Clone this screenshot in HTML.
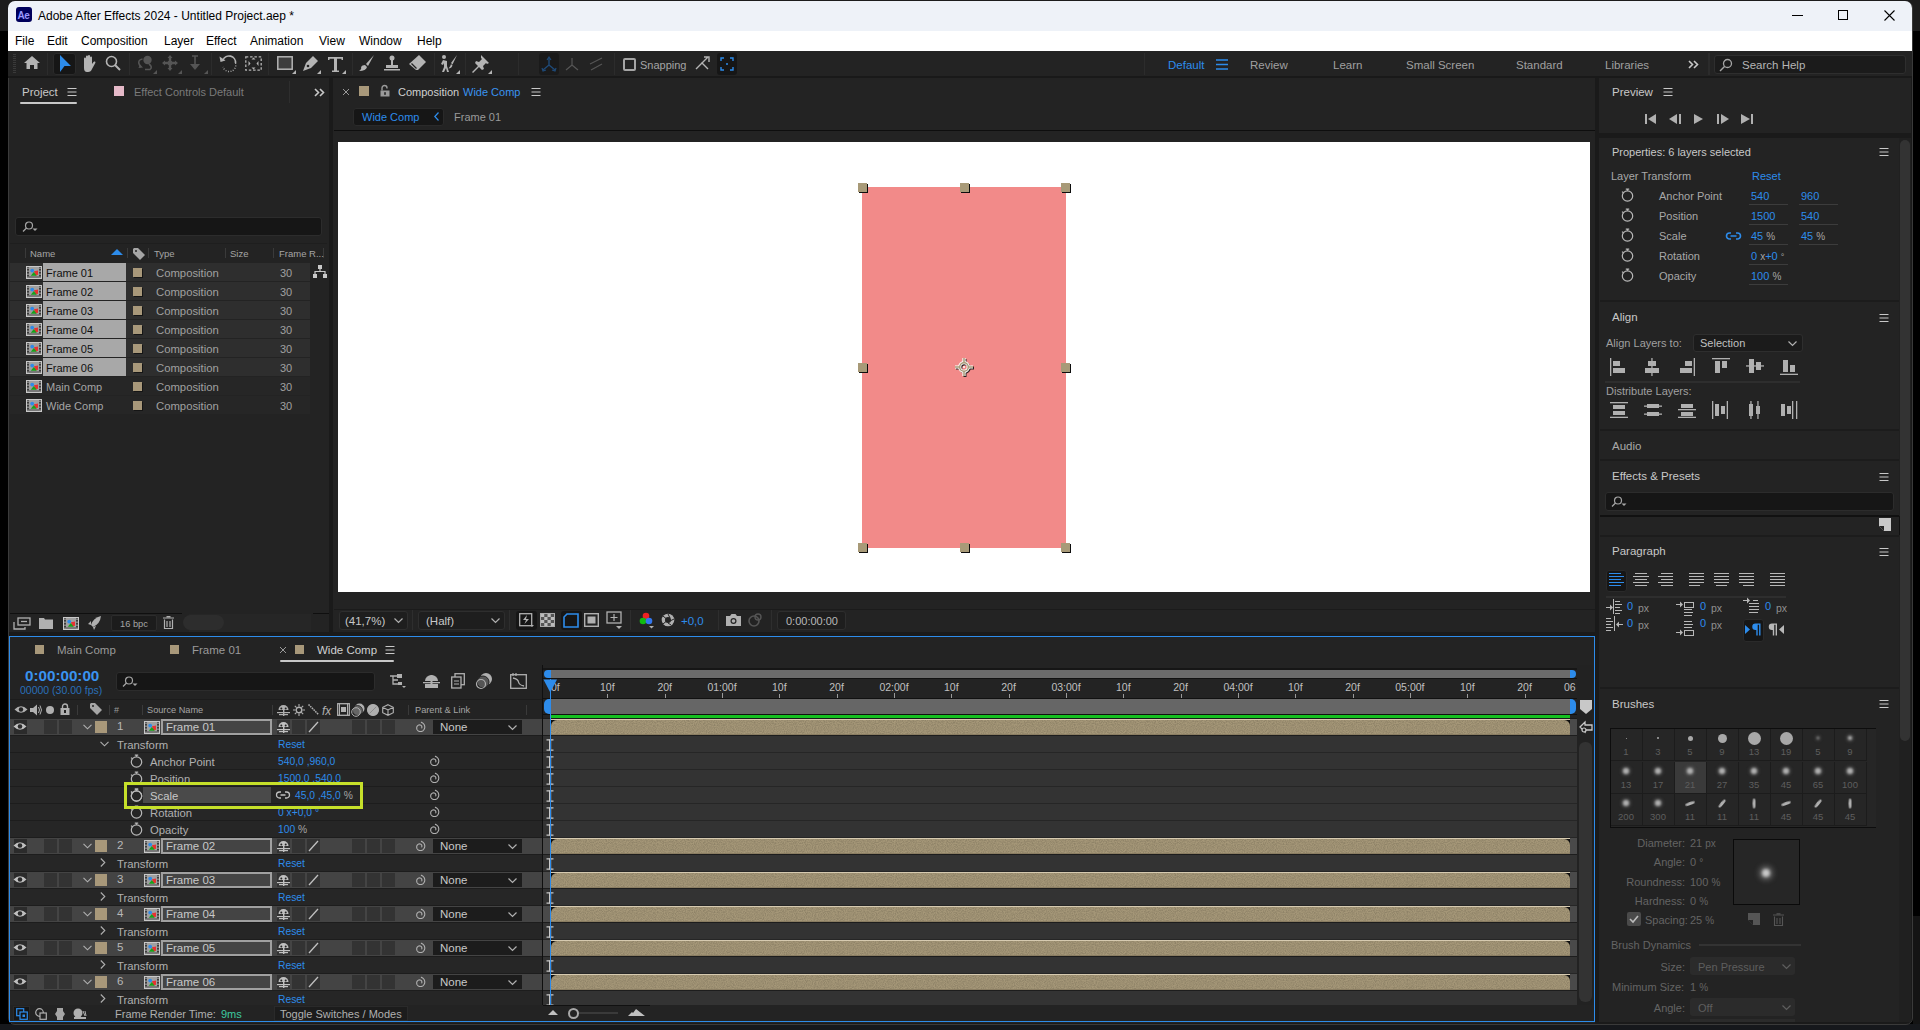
<!DOCTYPE html><html><head><meta charset="utf-8"><style>
*{box-sizing:border-box;margin:0;padding:0}
html,body{width:1920px;height:1030px;overflow:hidden;background:#000;font-family:"Liberation Sans",sans-serif;font-size:12px;color:#a5a5a5}
.a{position:absolute}
.t{position:absolute;white-space:nowrap;line-height:12px;transform:translateY(-5px)}
svg.a{overflow:visible}
</style></head><body>
<div class="a" style="left:0px;top:0px;width:1920px;height:31px;background:#1c1c1c;"></div>
<div class="a" style="left:0px;top:31px;width:1920px;height:999px;background:#000;"></div>
<div class="a" style="left:1913px;top:916px;width:7px;height:114px;background:#141414;"></div>
<div class="a" style="left:0px;top:1024px;width:1920px;height:6px;background:#16181c;"></div>
<div class="a" style="left:8px;top:1px;width:1905px;height:1024px;background:#1a1a1a;border-radius:7px;border:1px solid #3a3a3a;"></div>
<div class="a" style="left:8px;top:1px;width:1904px;height:30px;background:#eef2f8;border-radius:7px 7px 0 0;"></div>
<div class="a" style="left:8px;top:31px;width:1904px;height:20px;background:#ffffff;"></div>
<div class="a" style="left:16px;top:7px;width:16px;height:15px;background:#00005b;border-radius:3px;"></div>
<div class="t" style="left:17.5px;top:14.5px;font-size:10px;color:#9999ff;font-weight:bold;letter-spacing:-0.5px;">Ae</div>
<div class="t" style="left:38px;top:15px;font-size:12px;color:#000;">Adobe After Effects 2024 - Untitled Project.aep *</div>
<div class="a" style="left:1792px;top:15px;width:11px;height:1px;background:#000;"></div>
<div class="a" style="left:1838px;top:10px;width:10px;height:10px;border:1px solid #000;"></div>
<svg class="a" style="left:1884px;top:10px;" width="11" height="11" viewBox="0 0 11 11"><path d="M0.5 0.5L10.5 10.5M10.5 0.5L0.5 10.5" stroke="#000" stroke-width="1.1"/></svg>
<div class="t" style="left:15px;top:40px;font-size:12px;color:#000;">File</div>
<div class="t" style="left:47px;top:40px;font-size:12px;color:#000;">Edit</div>
<div class="t" style="left:81px;top:40px;font-size:12px;color:#000;">Composition</div>
<div class="t" style="left:164px;top:40px;font-size:12px;color:#000;">Layer</div>
<div class="t" style="left:206px;top:40px;font-size:12px;color:#000;">Effect</div>
<div class="t" style="left:250px;top:40px;font-size:12px;color:#000;">Animation</div>
<div class="t" style="left:319px;top:40px;font-size:12px;color:#000;">View</div>
<div class="t" style="left:359px;top:40px;font-size:12px;color:#000;">Window</div>
<div class="t" style="left:417px;top:40px;font-size:12px;color:#000;">Help</div>
<div class="a" style="left:8px;top:51px;width:1904px;height:25px;background:#232323;"></div>
<div class="a" style="left:8px;top:76px;width:1904px;height:2px;background:#191919;"></div>
<div class="a" style="left:13px;top:54px;width:3px;height:1px;background:#3a3a3a;"></div>
<div class="a" style="left:13px;top:56px;width:3px;height:1px;background:#3a3a3a;"></div>
<div class="a" style="left:13px;top:58px;width:3px;height:1px;background:#3a3a3a;"></div>
<div class="a" style="left:13px;top:60px;width:3px;height:1px;background:#3a3a3a;"></div>
<div class="a" style="left:13px;top:62px;width:3px;height:1px;background:#3a3a3a;"></div>
<div class="a" style="left:13px;top:64px;width:3px;height:1px;background:#3a3a3a;"></div>
<div class="a" style="left:13px;top:66px;width:3px;height:1px;background:#3a3a3a;"></div>
<div class="a" style="left:13px;top:68px;width:3px;height:1px;background:#3a3a3a;"></div>
<div class="a" style="left:13px;top:70px;width:3px;height:1px;background:#3a3a3a;"></div>
<div class="a" style="left:13px;top:72px;width:3px;height:1px;background:#3a3a3a;"></div>
<svg class="a" style="left:24px;top:56px;" width="16" height="14" viewBox="0 0 16 14"><path d="M8 0L16 7H13.5V13H10V9H6V13H2.5V7H0Z" fill="#b4b4b4"/></svg>
<div class="a" style="left:47px;top:53px;width:1px;height:22px;background:#2c2c2c;"></div>
<div class="a" style="left:53px;top:53px;width:23px;height:22px;background:#161616;border-radius:3px;border:1px solid #2a2a2a;"></div>
<svg class="a" style="left:59px;top:55px;" width="12" height="18" viewBox="0 0 12 18"><path d="M1 0L12 11H5.5L1 17Z" fill="#2d8ceb"/></svg>
<svg class="a" style="left:81px;top:55px;" width="16" height="17" viewBox="0 0 16 17"><path d="M3 7V3.5a1 1 0 0 1 2 0V7V1.5a1 1 0 0 1 2 0V7V1a1 1 0 0 1 2 0V7V2.5a1 1 0 0 1 2 0V9l1.5-2a1 1 0 0 1 1.8 1L11 14q-1 3-4 3H6q-3 0-3-4Z" fill="#b4b4b4"/></svg>
<svg class="a" style="left:105px;top:55px;" width="16" height="16" viewBox="0 0 16 16"><circle cx="6.5" cy="6.5" r="5" fill="none" stroke="#b4b4b4" stroke-width="1.6"/><path d="M10 10L15 15" stroke="#b4b4b4" stroke-width="2"/></svg>
<div class="a" style="left:129px;top:53px;width:1px;height:22px;background:#2c2c2c;"></div>
<svg class="a" style="left:137px;top:55px;" width="18" height="16" viewBox="0 0 18 16"><circle cx="10.5" cy="5" r="4.2" fill="#555555"/><path d="M5.5 4Q0 5 2.5 10L4 12M12 9Q16 12 13 14.5H8" stroke="#555555" stroke-width="1.6" fill="none"/><path d="M1.5 13L6 12.5L3 9.5Z" fill="#555555"/></svg>
<svg class="a" style="left:162px;top:55px;" width="16" height="16" viewBox="0 0 16 16"><path d="M8 0L10.5 3H9.2V6.8H13V5.5L16 8L13 10.5V9.2H9.2V13H10.5L8 16L5.5 13H6.8V9.2H3V10.5L0 8L3 5.5V6.8H6.8V3H5.5Z" fill="#555555"/><circle cx="8" cy="8" r="2.5" fill="#555555"/></svg>
<svg class="a" style="left:189px;top:55px;" width="12" height="16" viewBox="0 0 12 16"><path d="M3 1H9M6 1V10" stroke="#555555" stroke-width="1.6"/><path d="M1 9H11L6 15Z" fill="#555555"/></svg>
<div class="a" style="left:211px;top:53px;width:1px;height:22px;background:#2c2c2c;"></div>
<svg class="a" style="left:219px;top:55px;" width="18" height="17" viewBox="0 0 18 17"><path d="M4 5A6.5 6.5 0 0 1 16.5 8" stroke="#b4b4b4" stroke-width="1.6" fill="none"/><path d="M16.5 8A6.5 6.5 0 0 1 4 12" stroke="#b4b4b4" stroke-width="1.4" fill="none" stroke-dasharray="0.9 1.6"/><path d="M0.5 1.5L1.5 7L6.5 5.5Z" fill="#b4b4b4"/></svg>
<svg class="a" style="left:245px;top:56px;" width="17" height="15" viewBox="0 0 17 15"><rect x="0.8" y="0.8" width="15.4" height="13.4" fill="none" stroke="#b4b4b4" stroke-width="1.3" stroke-dasharray="2.5 1.8"/><path d="M6.5 3.5h4l-2 -2z M6.5 11.5h4l-2 2z M3.5 5v5l2-2.5z M13.5 5v5l-2-2.5z" fill="#b4b4b4"/></svg>
<div class="a" style="left:268px;top:53px;width:1px;height:22px;background:#2c2c2c;"></div>
<svg class="a" style="left:277px;top:56px;" width="16" height="14" viewBox="0 0 16 14"><rect x="0.8" y="0.8" width="14.4" height="12.4" fill="#3d3d3d" stroke="#b4b4b4" stroke-width="1.5"/></svg>
<svg class="a" style="left:301px;top:55px;" width="18" height="17" viewBox="0 0 18 17"><path d="M2 16l3-8 7-7 5 5-7 7z" fill="#b4b4b4"/><circle cx="7" cy="11" r="1.3" fill="#232323"/></svg>
<svg class="a" style="left:327px;top:56px;" width="17" height="16" viewBox="0 0 17 16"><path d="M1 1H16V4H14.5V2.8H10V14.5H12V16H5V14.5H7V2.8H2.5V4H1Z" fill="#b4b4b4"/></svg>
<div class="a" style="left:352px;top:53px;width:1px;height:22px;background:#2c2c2c;"></div>
<svg class="a" style="left:358px;top:55px;" width="17" height="17" viewBox="0 0 17 17"><path d="M16 0L8 9l2 2Z" fill="#b4b4b4"/><path d="M7 10l2 2q-1 4-8 4q3-2 2-4q1-2 4-2z" fill="#b4b4b4"/></svg>
<svg class="a" style="left:383px;top:55px;" width="18" height="16" viewBox="0 0 18 16"><circle cx="9" cy="3" r="2.5" fill="#b4b4b4"/><rect x="8" y="5" width="2" height="5" fill="#b4b4b4"/><rect x="3" y="10" width="12" height="3" fill="#b4b4b4"/><rect x="1" y="14" width="16" height="1.5" fill="#b4b4b4"/></svg>
<svg class="a" style="left:409px;top:55px;" width="17" height="17" viewBox="0 0 17 17"><path d="M10 0l7 7-8 8-2 0-7-6z" fill="#b4b4b4"/><path d="M2.5 8.5l5 5" stroke="#232323" stroke-width="1.2"/></svg>
<div class="a" style="left:434px;top:53px;width:1px;height:22px;background:#2c2c2c;"></div>
<svg class="a" style="left:440px;top:55px;" width="18" height="17" viewBox="0 0 18 17"><circle cx="4" cy="2" r="2" fill="#b4b4b4"/><path d="M3 5l-2 4 2 1 1-2 0 4-2 5h2l2-4 1 4h2L7 11V6z" fill="#b4b4b4"/><path d="M17 0l-6 8 1.5 1.5z M11 9l1.5 1.5q-1 3-4 3q2-2 2.5-4.5z" fill="#b4b4b4"/></svg>
<div class="a" style="left:465px;top:53px;width:1px;height:22px;background:#2c2c2c;"></div>
<svg class="a" style="left:472px;top:55px;" width="17" height="17" viewBox="0 0 17 17"><path d="M9 0l8 8-2 1-1-1-3 3 1 3-2 1-3-3-6 6-1-1 6-6-3-3 1-2 3 1 3-3-1-1z" fill="#b4b4b4"/></svg>
<div class="a" style="left:518px;top:53px;width:1px;height:22px;background:#2c2c2c;"></div>
<div class="a" style="left:539px;top:53px;width:20px;height:22px;background:#1a1a1a;border-radius:3px;"></div>
<svg class="a" style="left:541px;top:56px;" width="16" height="16" viewBox="0 0 16 16"><path d="M8 2V9M8 9L2 14M8 9L14 14" stroke="#1f4a78" stroke-width="1.4" fill="none"/><path d="M6 4L8 1L10 4M1 12L2 15L5 14M11 14L14 15L15 12" stroke="#1f4a78" stroke-width="1.2" fill="none"/></svg>
<svg class="a" style="left:564px;top:56px;" width="16" height="16" viewBox="0 0 16 16"><path d="M8 2V9M8 9L2 14M8 9L14 14" stroke="#555555" stroke-width="1.2" fill="none"/></svg>
<svg class="a" style="left:588px;top:56px;" width="16" height="16" viewBox="0 0 16 16"><path d="M2 8L14 2M3 14L14 8" stroke="#555555" stroke-width="1.2" fill="none"/></svg>
<div class="a" style="left:614px;top:53px;width:1px;height:22px;background:#2c2c2c;"></div>
<div class="a" style="left:623px;top:58px;width:13px;height:13px;border:2px solid #a5a5a5;border-radius:2px;"></div>
<div class="t" style="left:640px;top:64px;font-size:11px;color:#a5a5a5;">Snapping</div>
<svg class="a" style="left:695px;top:57px;" width="15" height="13" viewBox="0 0 15 13"><path d="M1 12L7 6L13 12" stroke="#b4b4b4" stroke-width="1.4" fill="none"/><path d="M7 6L13 0M9 0H14V5" stroke="#b4b4b4" stroke-width="1.4" fill="none"/></svg>
<div class="a" style="left:717px;top:53px;width:20px;height:22px;background:#161616;border-radius:3px;"></div>
<svg class="a" style="left:720px;top:57px;" width="14" height="14" viewBox="0 0 14 14"><path d="M1 4V1H4M10 1H13V4M13 10V13H10M4 13H1V10" stroke="#2d8ceb" stroke-width="1.4" fill="none"/><circle cx="7" cy="7" r="1" fill="#2d8ceb"/></svg>
<div class="a" style="left:1144px;top:53px;width:1px;height:22px;background:#2c2c2c;"></div>
<div class="t" style="left:1168px;top:64px;font-size:11.5px;color:#2d8ceb;">Default</div>
<svg class="a" style="left:1216px;top:59px;" width="12" height="11" viewBox="0 0 12 11"><path d="M0 1H12M0 5.5H12M0 10H12" stroke="#2d8ceb" stroke-width="1.3"/></svg>
<div class="t" style="left:1250px;top:64px;font-size:11.5px;color:#a0a0a0;">Review</div>
<div class="t" style="left:1333px;top:64px;font-size:11.5px;color:#a0a0a0;">Learn</div>
<div class="t" style="left:1406px;top:64px;font-size:11.5px;color:#a0a0a0;">Small Screen</div>
<div class="t" style="left:1516px;top:64px;font-size:11.5px;color:#a0a0a0;">Standard</div>
<div class="t" style="left:1605px;top:64px;font-size:11.5px;color:#a0a0a0;">Libraries</div>
<svg class="a" style="left:1688px;top:60px;" width="11" height="9" viewBox="0 0 11 9"><path d="M1 1L4.5 4.5L1 8M6 1L9.5 4.5L6 8" stroke="#c8c8c8" stroke-width="1.6" fill="none"/></svg>
<div class="a" style="left:1708px;top:53px;width:2px;height:22px;background:#2b2b2b;"></div>
<div class="a" style="left:1714px;top:55px;width:192px;height:19px;background:#1b1b1b;border-radius:3px;border:1px solid #2e2e2e;"></div>
<svg class="a" style="left:1719px;top:58px;" width="14" height="14" viewBox="0 0 14 14"><circle cx="8.5" cy="5.5" r="4" fill="none" stroke="#a5a5a5" stroke-width="1.3"/><path d="M5.5 8.5L1 13" stroke="#a5a5a5" stroke-width="1.5"/></svg>
<div class="t" style="left:1742px;top:64px;font-size:11.5px;color:#b5b5b5;">Search Help</div>
<svg class="a" style="left:153px;top:70px;" width="4" height="4" viewBox="0 0 4 4"><path d="M4 0V4H0Z" fill="#555555"/></svg>
<svg class="a" style="left:178px;top:70px;" width="4" height="4" viewBox="0 0 4 4"><path d="M4 0V4H0Z" fill="#555555"/></svg>
<svg class="a" style="left:204px;top:70px;" width="4" height="4" viewBox="0 0 4 4"><path d="M4 0V4H0Z" fill="#555555"/></svg>
<svg class="a" style="left:292px;top:70px;" width="4" height="4" viewBox="0 0 4 4"><path d="M4 0V4H0Z" fill="#b4b4b4"/></svg>
<svg class="a" style="left:317px;top:70px;" width="4" height="4" viewBox="0 0 4 4"><path d="M4 0V4H0Z" fill="#b4b4b4"/></svg>
<svg class="a" style="left:342px;top:70px;" width="4" height="4" viewBox="0 0 4 4"><path d="M4 0V4H0Z" fill="#b4b4b4"/></svg>
<svg class="a" style="left:456px;top:70px;" width="4" height="4" viewBox="0 0 4 4"><path d="M4 0V4H0Z" fill="#b4b4b4"/></svg>
<svg class="a" style="left:488px;top:70px;" width="4" height="4" viewBox="0 0 4 4"><path d="M4 0V4H0Z" fill="#b4b4b4"/></svg>
<div class="a" style="left:9px;top:78px;width:320px;height:554px;background:#232323;"></div>
<div class="t" style="left:22px;top:91px;font-size:11.5px;color:#c8c8c8;">Project</div>
<svg class="a" style="left:67px;top:87px;" width="11" height="10" viewBox="0 0 11 10"><path d="M0.5 1.5H9.5M0.5 5H9.5M0.5 8.5H9.5" stroke="#c8c8c8" stroke-width="1"/></svg>
<div class="a" style="left:20px;top:102px;width:57px;height:2px;background:#c8c8c8;border-radius:1px;"></div>
<div class="a" style="left:114px;top:86px;width:10px;height:10px;background:#e5b9c8;"></div>
<div class="t" style="left:134px;top:91px;font-size:11px;color:#7a7a7a;">Effect Controls Default</div>
<div class="a" style="left:289px;top:81px;width:1px;height:22px;background:#2e2e2e;"></div>
<svg class="a" style="left:314px;top:88px;" width="11" height="9" viewBox="0 0 11 9"><path d="M1 1L4.5 4.5L1 8M6 1L9.5 4.5L6 8" stroke="#c8c8c8" stroke-width="1.6" fill="none"/></svg>
<div class="a" style="left:15px;top:217px;width:307px;height:19px;background:#161616;border-radius:3px;border:1px solid #2c2c2c;"></div>
<svg class="a" style="left:22px;top:221px;" width="16" height="12" viewBox="0 0 16 12"><circle cx="7" cy="4.5" r="3.5" fill="none" stroke="#a5a5a5" stroke-width="1.2"/><path d="M4.5 7L1 10.5" stroke="#a5a5a5" stroke-width="1.3"/><path d="M10.5 7.5H15.5L13 10Z" fill="#a5a5a5"/></svg>
<div class="a" style="left:10px;top:243px;width:317px;height:1px;background:#1e1e1e;"></div>
<div class="a" style="left:25px;top:248px;width:1px;height:10px;background:#3a3a3a;"></div>
<div class="a" style="left:127px;top:248px;width:1px;height:10px;background:#3a3a3a;"></div>
<div class="a" style="left:148px;top:248px;width:1px;height:10px;background:#3a3a3a;"></div>
<div class="a" style="left:225px;top:248px;width:1px;height:10px;background:#3a3a3a;"></div>
<div class="a" style="left:273px;top:248px;width:1px;height:10px;background:#3a3a3a;"></div>
<div class="a" style="left:323px;top:248px;width:1px;height:10px;background:#3a3a3a;"></div>
<div class="t" style="left:30px;top:253px;font-size:9.5px;color:#a5a5a5;">Name</div>
<svg class="a" style="left:111px;top:249px;" width="12" height="6" viewBox="0 0 12 6"><path d="M0 6L6 0L12 6Z" fill="#2d8ceb"/></svg>
<svg class="a" style="left:133px;top:248px;" width="12" height="12" viewBox="0 0 12 12"><path d="M0 1V5L7 12L12 7L5 0H1Z" fill="#a5a5a5"/><circle cx="3" cy="3" r="1" fill="#232323"/></svg>
<div class="t" style="left:154px;top:253px;font-size:9.5px;color:#a5a5a5;">Type</div>
<div class="t" style="left:230px;top:253px;font-size:9.5px;color:#a5a5a5;">Size</div>
<div class="t" style="left:279px;top:253px;font-size:9.5px;color:#a5a5a5;">Frame R...</div>
<div class="a" style="left:10px;top:263px;width:300px;height:18px;background:#2e2e2e;"></div>
<svg class="a" style="left:26px;top:266px;" width="16" height="13" viewBox="0 0 16 13"><rect x="0.5" y="0.5" width="15" height="12" fill="#a0a0a0" stroke="#c8c8c8"/><rect x="1" y="1" width="2" height="11" fill="#3c3c3c"/><rect x="13" y="1" width="2" height="11" fill="#3c3c3c"/><path d="M2 1.5V3M2 4.5V6M2 7.5V9M2 10.5V12M14 1.5V3M14 4.5V6M14 7.5V9M14 10.5V12" stroke="#c8c8c8" stroke-width="1"/><rect x="3" y="10.5" width="10" height="1" fill="#505050"/><path d="M8 5.2L12 4.4V8.8L9.2 9.6Z" fill="#e83232"/><path d="M4.8 9.8L7.8 6L10.8 9.8Z" fill="#17a21a"/><circle cx="6.2" cy="4.6" r="1.9" fill="#2f8ae8"/></svg>
<div class="a" style="left:43px;top:263px;width:83px;height:18px;background:#a8a8a8;"></div>
<div class="t" style="left:46px;top:272px;font-size:11px;color:#111;">Frame 01</div>
<div class="a" style="left:133px;top:268px;width:9px;height:9px;background:#a8987a;box-shadow:1px 1px 0 #151515;"></div>
<div class="t" style="left:156px;top:272px;font-size:11.3px;color:#a0a0a0;">Composition</div>
<div class="t" style="left:280px;top:272px;font-size:11px;color:#a0a0a0;">30</div>
<div class="a" style="left:10px;top:282px;width:300px;height:18px;background:#2e2e2e;"></div>
<svg class="a" style="left:26px;top:285px;" width="16" height="13" viewBox="0 0 16 13"><rect x="0.5" y="0.5" width="15" height="12" fill="#a0a0a0" stroke="#c8c8c8"/><rect x="1" y="1" width="2" height="11" fill="#3c3c3c"/><rect x="13" y="1" width="2" height="11" fill="#3c3c3c"/><path d="M2 1.5V3M2 4.5V6M2 7.5V9M2 10.5V12M14 1.5V3M14 4.5V6M14 7.5V9M14 10.5V12" stroke="#c8c8c8" stroke-width="1"/><rect x="3" y="10.5" width="10" height="1" fill="#505050"/><path d="M8 5.2L12 4.4V8.8L9.2 9.6Z" fill="#e83232"/><path d="M4.8 9.8L7.8 6L10.8 9.8Z" fill="#17a21a"/><circle cx="6.2" cy="4.6" r="1.9" fill="#2f8ae8"/></svg>
<div class="a" style="left:43px;top:282px;width:83px;height:18px;background:#a8a8a8;"></div>
<div class="t" style="left:46px;top:291px;font-size:11px;color:#111;">Frame 02</div>
<div class="a" style="left:133px;top:287px;width:9px;height:9px;background:#a8987a;box-shadow:1px 1px 0 #151515;"></div>
<div class="t" style="left:156px;top:291px;font-size:11.3px;color:#a0a0a0;">Composition</div>
<div class="t" style="left:280px;top:291px;font-size:11px;color:#a0a0a0;">30</div>
<div class="a" style="left:10px;top:301px;width:300px;height:18px;background:#2e2e2e;"></div>
<svg class="a" style="left:26px;top:304px;" width="16" height="13" viewBox="0 0 16 13"><rect x="0.5" y="0.5" width="15" height="12" fill="#a0a0a0" stroke="#c8c8c8"/><rect x="1" y="1" width="2" height="11" fill="#3c3c3c"/><rect x="13" y="1" width="2" height="11" fill="#3c3c3c"/><path d="M2 1.5V3M2 4.5V6M2 7.5V9M2 10.5V12M14 1.5V3M14 4.5V6M14 7.5V9M14 10.5V12" stroke="#c8c8c8" stroke-width="1"/><rect x="3" y="10.5" width="10" height="1" fill="#505050"/><path d="M8 5.2L12 4.4V8.8L9.2 9.6Z" fill="#e83232"/><path d="M4.8 9.8L7.8 6L10.8 9.8Z" fill="#17a21a"/><circle cx="6.2" cy="4.6" r="1.9" fill="#2f8ae8"/></svg>
<div class="a" style="left:43px;top:301px;width:83px;height:18px;background:#a8a8a8;"></div>
<div class="t" style="left:46px;top:310px;font-size:11px;color:#111;">Frame 03</div>
<div class="a" style="left:133px;top:306px;width:9px;height:9px;background:#a8987a;box-shadow:1px 1px 0 #151515;"></div>
<div class="t" style="left:156px;top:310px;font-size:11.3px;color:#a0a0a0;">Composition</div>
<div class="t" style="left:280px;top:310px;font-size:11px;color:#a0a0a0;">30</div>
<div class="a" style="left:10px;top:320px;width:300px;height:18px;background:#2e2e2e;"></div>
<svg class="a" style="left:26px;top:323px;" width="16" height="13" viewBox="0 0 16 13"><rect x="0.5" y="0.5" width="15" height="12" fill="#a0a0a0" stroke="#c8c8c8"/><rect x="1" y="1" width="2" height="11" fill="#3c3c3c"/><rect x="13" y="1" width="2" height="11" fill="#3c3c3c"/><path d="M2 1.5V3M2 4.5V6M2 7.5V9M2 10.5V12M14 1.5V3M14 4.5V6M14 7.5V9M14 10.5V12" stroke="#c8c8c8" stroke-width="1"/><rect x="3" y="10.5" width="10" height="1" fill="#505050"/><path d="M8 5.2L12 4.4V8.8L9.2 9.6Z" fill="#e83232"/><path d="M4.8 9.8L7.8 6L10.8 9.8Z" fill="#17a21a"/><circle cx="6.2" cy="4.6" r="1.9" fill="#2f8ae8"/></svg>
<div class="a" style="left:43px;top:320px;width:83px;height:18px;background:#a8a8a8;"></div>
<div class="t" style="left:46px;top:329px;font-size:11px;color:#111;">Frame 04</div>
<div class="a" style="left:133px;top:325px;width:9px;height:9px;background:#a8987a;box-shadow:1px 1px 0 #151515;"></div>
<div class="t" style="left:156px;top:329px;font-size:11.3px;color:#a0a0a0;">Composition</div>
<div class="t" style="left:280px;top:329px;font-size:11px;color:#a0a0a0;">30</div>
<div class="a" style="left:10px;top:339px;width:300px;height:18px;background:#2e2e2e;"></div>
<svg class="a" style="left:26px;top:342px;" width="16" height="13" viewBox="0 0 16 13"><rect x="0.5" y="0.5" width="15" height="12" fill="#a0a0a0" stroke="#c8c8c8"/><rect x="1" y="1" width="2" height="11" fill="#3c3c3c"/><rect x="13" y="1" width="2" height="11" fill="#3c3c3c"/><path d="M2 1.5V3M2 4.5V6M2 7.5V9M2 10.5V12M14 1.5V3M14 4.5V6M14 7.5V9M14 10.5V12" stroke="#c8c8c8" stroke-width="1"/><rect x="3" y="10.5" width="10" height="1" fill="#505050"/><path d="M8 5.2L12 4.4V8.8L9.2 9.6Z" fill="#e83232"/><path d="M4.8 9.8L7.8 6L10.8 9.8Z" fill="#17a21a"/><circle cx="6.2" cy="4.6" r="1.9" fill="#2f8ae8"/></svg>
<div class="a" style="left:43px;top:339px;width:83px;height:18px;background:#a8a8a8;"></div>
<div class="t" style="left:46px;top:348px;font-size:11px;color:#111;">Frame 05</div>
<div class="a" style="left:133px;top:344px;width:9px;height:9px;background:#a8987a;box-shadow:1px 1px 0 #151515;"></div>
<div class="t" style="left:156px;top:348px;font-size:11.3px;color:#a0a0a0;">Composition</div>
<div class="t" style="left:280px;top:348px;font-size:11px;color:#a0a0a0;">30</div>
<div class="a" style="left:10px;top:358px;width:300px;height:18px;background:#2e2e2e;"></div>
<svg class="a" style="left:26px;top:361px;" width="16" height="13" viewBox="0 0 16 13"><rect x="0.5" y="0.5" width="15" height="12" fill="#a0a0a0" stroke="#c8c8c8"/><rect x="1" y="1" width="2" height="11" fill="#3c3c3c"/><rect x="13" y="1" width="2" height="11" fill="#3c3c3c"/><path d="M2 1.5V3M2 4.5V6M2 7.5V9M2 10.5V12M14 1.5V3M14 4.5V6M14 7.5V9M14 10.5V12" stroke="#c8c8c8" stroke-width="1"/><rect x="3" y="10.5" width="10" height="1" fill="#505050"/><path d="M8 5.2L12 4.4V8.8L9.2 9.6Z" fill="#e83232"/><path d="M4.8 9.8L7.8 6L10.8 9.8Z" fill="#17a21a"/><circle cx="6.2" cy="4.6" r="1.9" fill="#2f8ae8"/></svg>
<div class="a" style="left:43px;top:358px;width:83px;height:18px;background:#a8a8a8;"></div>
<div class="t" style="left:46px;top:367px;font-size:11px;color:#111;">Frame 06</div>
<div class="a" style="left:133px;top:363px;width:9px;height:9px;background:#a8987a;box-shadow:1px 1px 0 #151515;"></div>
<div class="t" style="left:156px;top:367px;font-size:11.3px;color:#a0a0a0;">Composition</div>
<div class="t" style="left:280px;top:367px;font-size:11px;color:#a0a0a0;">30</div>
<div class="a" style="left:10px;top:377px;width:300px;height:18px;background:#262626;"></div>
<svg class="a" style="left:26px;top:380px;" width="16" height="13" viewBox="0 0 16 13"><rect x="0.5" y="0.5" width="15" height="12" fill="#a0a0a0" stroke="#c8c8c8"/><rect x="1" y="1" width="2" height="11" fill="#3c3c3c"/><rect x="13" y="1" width="2" height="11" fill="#3c3c3c"/><path d="M2 1.5V3M2 4.5V6M2 7.5V9M2 10.5V12M14 1.5V3M14 4.5V6M14 7.5V9M14 10.5V12" stroke="#c8c8c8" stroke-width="1"/><rect x="3" y="10.5" width="10" height="1" fill="#505050"/><path d="M8 5.2L12 4.4V8.8L9.2 9.6Z" fill="#e83232"/><path d="M4.8 9.8L7.8 6L10.8 9.8Z" fill="#17a21a"/><circle cx="6.2" cy="4.6" r="1.9" fill="#2f8ae8"/></svg>
<div class="t" style="left:46px;top:386px;font-size:11px;color:#a5a5a5;">Main Comp</div>
<div class="a" style="left:133px;top:382px;width:9px;height:9px;background:#a8987a;box-shadow:1px 1px 0 #151515;"></div>
<div class="t" style="left:156px;top:386px;font-size:11.3px;color:#a0a0a0;">Composition</div>
<div class="t" style="left:280px;top:386px;font-size:11px;color:#a0a0a0;">30</div>
<div class="a" style="left:10px;top:396px;width:300px;height:18px;background:#262626;"></div>
<svg class="a" style="left:26px;top:399px;" width="16" height="13" viewBox="0 0 16 13"><rect x="0.5" y="0.5" width="15" height="12" fill="#a0a0a0" stroke="#c8c8c8"/><rect x="1" y="1" width="2" height="11" fill="#3c3c3c"/><rect x="13" y="1" width="2" height="11" fill="#3c3c3c"/><path d="M2 1.5V3M2 4.5V6M2 7.5V9M2 10.5V12M14 1.5V3M14 4.5V6M14 7.5V9M14 10.5V12" stroke="#c8c8c8" stroke-width="1"/><rect x="3" y="10.5" width="10" height="1" fill="#505050"/><path d="M8 5.2L12 4.4V8.8L9.2 9.6Z" fill="#e83232"/><path d="M4.8 9.8L7.8 6L10.8 9.8Z" fill="#17a21a"/><circle cx="6.2" cy="4.6" r="1.9" fill="#2f8ae8"/></svg>
<div class="t" style="left:46px;top:405px;font-size:11px;color:#a5a5a5;">Wide Comp</div>
<div class="a" style="left:133px;top:401px;width:9px;height:9px;background:#a8987a;box-shadow:1px 1px 0 #151515;"></div>
<div class="t" style="left:156px;top:405px;font-size:11.3px;color:#a0a0a0;">Composition</div>
<div class="t" style="left:280px;top:405px;font-size:11px;color:#a0a0a0;">30</div>
<svg class="a" style="left:313px;top:265px;" width="14" height="13" viewBox="0 0 14 13"><rect x="5" y="0" width="4" height="4" fill="#c8c8c8"/><rect x="0" y="9" width="4" height="4" fill="#c8c8c8"/><rect x="10" y="9" width="4" height="4" fill="#c8c8c8"/><path d="M7 4V7M2 9V6.5H12V9" stroke="#c8c8c8" stroke-width="1.2" fill="none"/></svg>
<div class="a" style="left:10px;top:613px;width:172px;height:1px;background:#0f0f0f;"></div>
<div class="a" style="left:313px;top:613px;width:16px;height:1px;background:#0f0f0f;"></div>
<div class="a" style="left:10px;top:614px;width:319px;height:18px;background:#232323;"></div>
<div class="a" style="left:189px;top:614px;width:122px;height:18px;background:#262626;"></div>
<svg class="a" style="left:13px;top:617px;" width="18" height="13" viewBox="0 0 18 13"><rect x="5" y="1" width="12" height="7" fill="none" stroke="#b0b0b0" stroke-width="1.3"/><path d="M8 4.5H14" stroke="#b0b0b0" stroke-width="1.3"/><path d="M1 5V12H12V10" stroke="#b0b0b0" stroke-width="1.3" fill="none"/></svg>
<svg class="a" style="left:39px;top:617px;" width="15" height="13" viewBox="0 0 15 13"><path d="M0 1H5L6 2.5H14V12H0Z" fill="#b0b0b0"/></svg>
<svg class="a" style="left:63px;top:617px;" width="16" height="13" viewBox="0 0 16 13"><rect x="0.5" y="0.5" width="15" height="12" fill="#a0a0a0" stroke="#c8c8c8"/><rect x="1" y="1" width="2" height="11" fill="#3c3c3c"/><rect x="13" y="1" width="2" height="11" fill="#3c3c3c"/><path d="M2 1.5V3M2 4.5V6M2 7.5V9M2 10.5V12M14 1.5V3M14 4.5V6M14 7.5V9M14 10.5V12" stroke="#c8c8c8" stroke-width="1"/><rect x="3" y="10.5" width="10" height="1" fill="#505050"/><path d="M8 5.2L12 4.4V8.8L9.2 9.6Z" fill="#e83232"/><path d="M4.8 9.8L7.8 6L10.8 9.8Z" fill="#17a21a"/><circle cx="6.2" cy="4.6" r="1.9" fill="#2f8ae8"/></svg>
<svg class="a" style="left:88px;top:616px;" width="14" height="15" viewBox="0 0 14 15"><path d="M13 0Q5 2 3 9L5 11Q12 8 13 0Z" fill="#b0b0b0"/><path d="M3 9L0 8L3 5ZM5 11L6 14L8 10Z" fill="#b0b0b0"/></svg>
<div class="a" style="left:111px;top:615px;width:46px;height:16px;background:#1c1c1c;border-radius:2px;border:1px solid #2c2c2c;"></div>
<div class="t" style="left:120px;top:623px;font-size:9.3px;color:#a5a5a5;">16 bpc</div>
<svg class="a" style="left:163px;top:616px;" width="11" height="13" viewBox="0 0 11 13"><path d="M0 2H11M3.5 0.7H7.5M1.5 3.5V12.5H9.5V3.5M4 5V11M7 5V11" stroke="#b0b0b0" stroke-width="1.2" fill="none"/></svg>
<div class="a" style="left:183px;top:615px;width:41px;height:15px;background:#2d2d2d;border-radius:8px;"></div>
<div class="a" style="left:333px;top:78px;width:1262px;height:554px;background:#232323;"></div>
<svg class="a" style="left:342px;top:88px;" width="8" height="8" viewBox="0 0 8 8"><path d="M1 1L7 7M7 1L1 7" stroke="#9a9a9a" stroke-width="1"/></svg>
<div class="a" style="left:359px;top:86px;width:10px;height:10px;background:#a8987a;"></div>
<svg class="a" style="left:380px;top:85px;" width="10" height="12" viewBox="0 0 10 12"><path d="M2 5.5V3a2.5 2.5 0 0 1 5 0V3.5" stroke="#9a9a9a" stroke-width="1.4" fill="none"/><rect x="0.5" y="5.5" width="9" height="6" fill="#9a9a9a"/><rect x="4.2" y="7.2" width="1.6" height="2.6" fill="#232323"/></svg>
<div class="t" style="left:398px;top:91px;font-size:11px;color:#d0d0d0;">Composition</div>
<div class="t" style="left:463px;top:91px;font-size:11px;color:#3a93f0;">Wide Comp</div>
<svg class="a" style="left:531px;top:87px;" width="11" height="10" viewBox="0 0 11 10"><path d="M0.5 1.5H9.5M0.5 5H9.5M0.5 8.5H9.5" stroke="#c8c8c8" stroke-width="1"/></svg>
<div class="a" style="left:353px;top:108px;width:91px;height:18px;background:#161616;border-radius:3px;border:1px solid #2a2a2a;"></div>
<div class="t" style="left:362px;top:116px;font-size:11px;color:#2d8ceb;">Wide Comp</div>
<svg class="a" style="left:434px;top:112px;" width="5" height="9" viewBox="0 0 5 9"><path d="M4.5 0.5L0.8 4.5L4.5 8.5" stroke="#2d8ceb" stroke-width="1.2" fill="none"/></svg>
<div class="t" style="left:454px;top:116px;font-size:11px;color:#9a9a9a;">Frame 01</div>
<div class="a" style="left:334px;top:130px;width:1261px;height:1px;background:#0e0e0e;"></div>
<div class="a" style="left:334px;top:131px;width:1261px;height:473px;background:#232323;"></div>
<div class="a" style="left:338px;top:142px;width:1252px;height:450px;background:#ffffff;"></div>
<div class="a" style="left:862px;top:187px;width:204px;height:361px;background:#f28a89;"></div>
<div class="a" style="left:859px;top:184px;width:9px;height:9px;background:#0d0d0d;"></div>
<div class="a" style="left:858px;top:183px;width:9px;height:9px;background:#a89a78;"></div>
<div class="a" style="left:859px;top:364px;width:9px;height:9px;background:#0d0d0d;"></div>
<div class="a" style="left:858px;top:363px;width:9px;height:9px;background:#a89a78;"></div>
<div class="a" style="left:859px;top:544px;width:9px;height:9px;background:#0d0d0d;"></div>
<div class="a" style="left:858px;top:543px;width:9px;height:9px;background:#a89a78;"></div>
<div class="a" style="left:961px;top:184px;width:9px;height:9px;background:#0d0d0d;"></div>
<div class="a" style="left:960px;top:183px;width:9px;height:9px;background:#a89a78;"></div>
<div class="a" style="left:961px;top:544px;width:9px;height:9px;background:#0d0d0d;"></div>
<div class="a" style="left:960px;top:543px;width:9px;height:9px;background:#a89a78;"></div>
<div class="a" style="left:1062px;top:184px;width:9px;height:9px;background:#0d0d0d;"></div>
<div class="a" style="left:1061px;top:183px;width:9px;height:9px;background:#a89a78;"></div>
<div class="a" style="left:1062px;top:364px;width:9px;height:9px;background:#0d0d0d;"></div>
<div class="a" style="left:1061px;top:363px;width:9px;height:9px;background:#a89a78;"></div>
<div class="a" style="left:1062px;top:544px;width:9px;height:9px;background:#0d0d0d;"></div>
<div class="a" style="left:1061px;top:543px;width:9px;height:9px;background:#a89a78;"></div>
<svg class="a" style="left:954px;top:357px;" width="21" height="21" viewBox="0 0 21 21"><g transform="translate(1,1)"><circle cx="10" cy="10" r="4.3" fill="none" stroke="#2a2020" stroke-width="3"/><path d="M10 1V5.7M10 14.3V19M1 10H5.7M14.3 10H19" stroke="#2a2020" stroke-width="3"/></g><circle cx="10" cy="10" r="4.3" fill="none" stroke="#ffffff" stroke-width="3.2"/><path d="M10 1V5.7M10 14.3V19M1 10H5.7M14.3 10H19" stroke="#ffffff" stroke-width="3.2"/><circle cx="10" cy="10" r="4.3" fill="none" stroke="#a89a78" stroke-width="1.5"/><path d="M10 1V5.7M10 14.3V19M1 10H5.7M14.3 10H19" stroke="#a89a78" stroke-width="1.5"/><circle cx="10" cy="10" r="1" fill="#fff"/></svg>
<div class="a" style="left:334px;top:609px;width:1261px;height:1px;background:#1b1b1b;"></div>
<div class="a" style="left:339px;top:611px;width:69px;height:19px;background:#1e1e1e;border-radius:3px;border:1px solid #2e2e2e;"></div>
<div class="t" style="left:345px;top:620px;font-size:11.5px;color:#c8c8c8;">(41,7%)</div>
<svg class="a" style="left:394px;top:618px;" width="9" height="5" viewBox="0 0 9 5"><path d="M0.5 0.5L4.5 4.5L8.5 0.5" stroke="#b0b0b0" stroke-width="1.2" fill="none"/></svg>
<div class="a" style="left:412px;top:610px;width:1px;height:20px;background:#2e2e2e;"></div>
<div class="a" style="left:418px;top:611px;width:87px;height:19px;background:#1e1e1e;border-radius:3px;border:1px solid #2e2e2e;"></div>
<div class="t" style="left:426px;top:620px;font-size:11.5px;color:#c8c8c8;">(Half)</div>
<svg class="a" style="left:491px;top:618px;" width="9" height="5" viewBox="0 0 9 5"><path d="M0.5 0.5L4.5 4.5L8.5 0.5" stroke="#b0b0b0" stroke-width="1.2" fill="none"/></svg>
<div class="a" style="left:509px;top:610px;width:1px;height:20px;background:#2e2e2e;"></div>
<div class="a" style="left:516px;top:611px;width:21px;height:19px;background:#161616;border-radius:3px;"></div>
<svg class="a" style="left:519px;top:613px;" width="15" height="15" viewBox="0 0 15 15"><rect x="0.7" y="0.7" width="12" height="12" fill="none" stroke="#b0b0b0" stroke-width="1.3"/><path d="M8 2L4 7H7L5.5 11L10 6H7Z" fill="#b0b0b0"/><path d="M11 12H15L13 14Z" fill="#b0b0b0"/></svg>
<svg class="a" style="left:540px;top:613px;" width="15" height="14" viewBox="0 0 15 14"><rect x="0.5" y="0.5" width="14" height="13" fill="#555" stroke="#aaa"/><rect x="1.0" y="1" width="3.25" height="3" fill="#bbb"/><rect x="1.0" y="7" width="3.25" height="3" fill="#bbb"/><rect x="4.25" y="4" width="3.25" height="3" fill="#bbb"/><rect x="4.25" y="10" width="3.25" height="3" fill="#bbb"/><rect x="7.5" y="1" width="3.25" height="3" fill="#bbb"/><rect x="7.5" y="7" width="3.25" height="3" fill="#bbb"/><rect x="10.75" y="4" width="3.25" height="3" fill="#bbb"/><rect x="10.75" y="10" width="3.25" height="3" fill="#bbb"/></svg>
<div class="a" style="left:561px;top:611px;width:21px;height:19px;background:#161616;border-radius:3px;"></div>
<svg class="a" style="left:563px;top:613px;" width="16" height="15" viewBox="0 0 16 15"><path d="M4 1H15V14H1V4Z" fill="none" stroke="#2d8ceb" stroke-width="1.6"/></svg>
<svg class="a" style="left:584px;top:613px;" width="15" height="14" viewBox="0 0 15 14"><rect x="0.7" y="0.7" width="13.6" height="12.6" fill="none" stroke="#b0b0b0" stroke-width="1.4"/><rect x="3.5" y="3.5" width="8" height="7" fill="#b0b0b0"/></svg>
<svg class="a" style="left:606px;top:611px;" width="17" height="18" viewBox="0 0 17 18"><rect x="1" y="1" width="14" height="11" fill="none" stroke="#b0b0b0" stroke-width="1.3"/><path d="M8 3V10M4.5 6.5H11.5" stroke="#b0b0b0" stroke-width="1.2"/><path d="M10 15H16L13 18Z" fill="#b0b0b0"/></svg>
<div class="a" style="left:630px;top:610px;width:1px;height:20px;background:#2e2e2e;"></div>
<svg class="a" style="left:638px;top:612px;" width="17" height="17" viewBox="0 0 17 17"><circle cx="8" cy="4" r="3.3" fill="#e22"/><circle cx="5" cy="9" r="3.3" fill="#1b1"/><circle cx="11" cy="9" r="3.3" fill="#37e"/><path d="M11 14H16L13.5 16.5Z" fill="#b0b0b0"/></svg>
<svg class="a" style="left:661px;top:613px;" width="14" height="14" viewBox="0 0 14 14"><circle cx="7" cy="7" r="6.3" fill="#b0b0b0"/><circle cx="7" cy="7" r="3" fill="#232323"/><path d="M7 1L9 5M13 6L9 8M10 12L7 10M2 11L5 8.5M2 3L5 5.5" stroke="#232323" stroke-width="1"/></svg>
<div class="t" style="left:681px;top:620px;font-size:11.5px;color:#2d8ceb;">+0,0</div>
<div class="a" style="left:718px;top:610px;width:1px;height:20px;background:#2e2e2e;"></div>
<svg class="a" style="left:726px;top:614px;" width="15" height="12" viewBox="0 0 15 12"><path d="M0 2H4L5.5 0H9.5L11 2H15V12H0Z" fill="#b0b0b0"/><circle cx="7.5" cy="7" r="3" fill="#232323"/><circle cx="7.5" cy="7" r="1.8" fill="#b0b0b0"/></svg>
<svg class="a" style="left:747px;top:613px;" width="16" height="14" viewBox="0 0 16 14"><circle cx="7" cy="8" r="5" fill="none" stroke="#555" stroke-width="1.6"/><circle cx="11" cy="4" r="3" fill="none" stroke="#555" stroke-width="1.4"/></svg>
<div class="a" style="left:771px;top:610px;width:1px;height:20px;background:#2e2e2e;"></div>
<div class="a" style="left:777px;top:611px;width:69px;height:19px;background:#1e1e1e;border-radius:3px;border:1px solid #2e2e2e;"></div>
<div class="t" style="left:786px;top:620px;font-size:11px;color:#b8b8b8;">0:00:00:00</div>
<div class="a" style="left:9px;top:636px;width:1586px;height:387px;background:#232323;"></div>
<div class="a" style="left:9px;top:636px;width:1586px;height:1px;background:#2d8ceb;"></div>
<div class="a" style="left:9px;top:636px;width:1px;height:386px;background:#2d8ceb;"></div>
<div class="a" style="left:1594px;top:636px;width:1px;height:386px;background:#2d8ceb;"></div>
<div class="a" style="left:9px;top:1021px;width:1586px;height:1px;background:#2d8ceb;"></div>
<div class="a" style="left:35px;top:645px;width:9px;height:9px;background:#a8987a;"></div>
<div class="t" style="left:57px;top:649px;font-size:11.5px;color:#9a9a9a;">Main Comp</div>
<div class="a" style="left:170px;top:645px;width:9px;height:9px;background:#a8987a;"></div>
<div class="t" style="left:192px;top:649px;font-size:11.5px;color:#9a9a9a;">Frame 01</div>
<svg class="a" style="left:279px;top:646px;" width="8" height="8" viewBox="0 0 8 8"><path d="M1 1L7 7M7 1L1 7" stroke="#9a9a9a" stroke-width="1"/></svg>
<div class="a" style="left:295px;top:645px;width:9px;height:9px;background:#a8987a;"></div>
<div class="t" style="left:317px;top:649px;font-size:11.5px;color:#d0d0d0;">Wide Comp</div>
<svg class="a" style="left:385px;top:645px;" width="11" height="10" viewBox="0 0 11 10"><path d="M0.5 1.5H9.5M0.5 5H9.5M0.5 8.5H9.5" stroke="#c8c8c8" stroke-width="1"/></svg>
<div class="a" style="left:280px;top:660px;width:114px;height:2px;background:#c8c8c8;border-radius:1px;"></div>
<div class="t" style="left:25px;top:675px;font-size:15.2px;color:#3a93f0;font-weight:bold;">0:00:00:00</div>
<div class="t" style="left:20px;top:689px;font-size:10.5px;color:#2a6fb8;">00000 (30.00 fps)</div>
<div class="a" style="left:116px;top:672px;width:259px;height:19px;background:#161616;border-radius:3px;border:1px solid #2c2c2c;"></div>
<svg class="a" style="left:122px;top:676px;" width="16" height="12" viewBox="0 0 16 12"><circle cx="7" cy="4.5" r="3.5" fill="none" stroke="#a5a5a5" stroke-width="1.2"/><path d="M4.5 7L1 10.5" stroke="#a5a5a5" stroke-width="1.3"/><path d="M10.5 7.5H15.5L13 10Z" fill="#a5a5a5"/></svg>
<svg class="a" style="left:389px;top:673px;" width="18" height="16" viewBox="0 0 18 16"><path d="M1 3H8M4 3V11H9M4 7H9" stroke="#b0b0b0" stroke-width="1.3" fill="none"/><rect x="8" y="1" width="5" height="4" fill="#b0b0b0"/><rect x="9" y="9" width="4" height="3" fill="#b0b0b0"/><path d="M13 13H17L15 15Z" fill="#b0b0b0"/></svg>
<svg class="a" style="left:423px;top:674px;" width="17" height="14" viewBox="0 0 17 14"><path d="M2 7A6.5 6 0 0 1 15 7Z" fill="#b0b0b0"/><rect x="0" y="8" width="17" height="1.3" fill="#b0b0b0"/><rect x="7.5" y="1" width="2" height="12" fill="#b0b0b0"/><rect x="2" y="10" width="13" height="4" fill="#b0b0b0"/></svg>
<svg class="a" style="left:451px;top:673px;" width="14" height="16" viewBox="0 0 14 16"><rect x="4" y="0.7" width="9.3" height="11" fill="none" stroke="#b0b0b0" stroke-width="1.3"/><rect x="0.7" y="4" width="9.3" height="11" fill="#232323" stroke="#b0b0b0" stroke-width="1.3"/><path d="M3 8H8M3 11H8" stroke="#b0b0b0"/></svg>
<svg class="a" style="left:476px;top:673px;" width="17" height="16" viewBox="0 0 17 16"><circle cx="10" cy="6" r="6" fill="#b0b0b0"/><circle cx="7" cy="9" r="6" fill="#555" stroke="#232323"/><circle cx="5" cy="11" r="4.5" fill="none" stroke="#b0b0b0" stroke-width="1.2"/></svg>
<svg class="a" style="left:510px;top:672px;" width="17" height="17" viewBox="0 0 17 17"><rect x="0.7" y="2.7" width="15.6" height="13.6" fill="none" stroke="#b0b0b0" stroke-width="1.3"/><path d="M3 1V4M6 1V4" stroke="#b0b0b0" stroke-width="1.2"/><path d="M3 6Q8 7 8.5 10T14 14" stroke="#b0b0b0" stroke-width="1.3" fill="none"/></svg>
<div class="a" style="left:10px;top:699px;width:532px;height:1px;background:#1c1c1c;"></div>
<svg class="a" style="left:14px;top:705px;" width="14" height="9" viewBox="0 0 14 9"><path d="M0.5 4.5Q7 -2 13.5 4.5Q7 11 0.5 4.5Z" fill="#b0b0b0"/><circle cx="7" cy="4.5" r="2.2" fill="#232323"/></svg>
<svg class="a" style="left:30px;top:704px;" width="12" height="12" viewBox="0 0 12 12"><path d="M0 4H3L7 0.5V11.5L3 8H0Z" fill="#b0b0b0"/><path d="M8.5 3Q10.5 6 8.5 9M10 1.5Q13 6 10 10.5" stroke="#b0b0b0" fill="none"/></svg>
<div class="a" style="left:46px;top:706px;width:8px;height:8px;border-radius:50%;background:#b0b0b0"></div>
<svg class="a" style="left:60px;top:703px;" width="10" height="12" viewBox="0 0 10 12"><path d="M2.5 5V3.5a2.5 2.5 0 0 1 5 0V5" stroke="#b0b0b0" stroke-width="1.4" fill="none"/><rect x="0.5" y="5" width="9" height="7" fill="#b0b0b0"/><rect x="4" y="7" width="2" height="3" fill="#232323"/></svg>
<div class="a" style="left:77px;top:705px;width:1px;height:10px;background:#3a3a3a;"></div>
<svg class="a" style="left:90px;top:703px;" width="12" height="12" viewBox="0 0 12 12"><path d="M0 1V5L7 12L12 7L5 0H1Z" fill="#a5a5a5"/><circle cx="3" cy="3" r="1" fill="#232323"/></svg>
<div class="a" style="left:109px;top:705px;width:1px;height:10px;background:#3a3a3a;"></div>
<div class="t" style="left:114px;top:709px;font-size:9px;color:#9a9a9a;">#</div>
<div class="a" style="left:142px;top:705px;width:1px;height:10px;background:#3a3a3a;"></div>
<div class="t" style="left:147px;top:709px;font-size:9.2px;color:#a5a5a5;">Source Name</div>
<div class="a" style="left:272px;top:705px;width:1px;height:10px;background:#3a3a3a;"></div>
<svg class="a" style="left:277px;top:704px;" width="13" height="12" viewBox="0 0 13 12"><path d="M1.5 6A5 5 0 0 1 11.5 6Z" fill="#b0b0b0"/><rect x="0" y="8" width="13" height="1.2" fill="#b0b0b0"/><rect x="6" y="2" width="1.4" height="10" fill="#b0b0b0"/><circle cx="4.3" cy="4.6" r="1" fill="#232323"/><circle cx="8.7" cy="4.6" r="1" fill="#232323"/><rect x="2" y="10" width="9" height="1.2" fill="#b0b0b0"/></svg>
<svg class="a" style="left:293px;top:704px;" width="12" height="12" viewBox="0 0 12 12"><circle cx="6" cy="6" r="2.8" fill="none" stroke="#b0b0b0" stroke-width="1.4"/><path d="M6 0V2.5M6 9.5V12M0 6H2.5M9.5 6H12M1.8 1.8L3.6 3.6M8.4 8.4L10.2 10.2M1.8 10.2L3.6 8.4M8.4 3.6L10.2 1.8" stroke="#b0b0b0" stroke-width="1.1"/></svg>
<svg class="a" style="left:308px;top:704px;" width="11" height="11" viewBox="0 0 11 11"><path d="M0.5 0.5L10.5 10.5" stroke="#b0b0b0" stroke-width="1.5" stroke-dasharray="1.6 0.8"/></svg>
<div class="t" style="left:322px;top:710px;font-size:12px;color:#b0b0b0;font-family:"Liberation Serif",serif;"><i>fx</i></div>
<svg class="a" style="left:337px;top:703px;" width="13" height="13" viewBox="0 0 13 13"><rect x="0.7" y="0.7" width="11.6" height="11.6" fill="none" stroke="#b0b0b0" stroke-width="1.3"/><path d="M2.5 0.5V12.5M10.5 0.5V12.5" stroke="#b0b0b0" stroke-width="1"/><rect x="4" y="4" width="5" height="5" fill="#b0b0b0"/></svg>
<svg class="a" style="left:351px;top:703px;" width="14" height="14" viewBox="0 0 14 14"><circle cx="8.5" cy="5.5" r="5" fill="#b0b0b0"/><circle cx="6.5" cy="7.5" r="5" fill="#666" stroke="#232323" stroke-width="0.8"/><circle cx="5" cy="9" r="4.3" fill="none" stroke="#b0b0b0" stroke-width="1"/></svg>
<svg class="a" style="left:367px;top:704px;" width="12" height="12" viewBox="0 0 12 12"><circle cx="6" cy="6" r="5.4" fill="none" stroke="#b0b0b0" stroke-width="1.2"/><path d="M10 2L2 10A5.4 5.4 0 0 0 10 2Z" fill="#b0b0b0"/><path d="M2 10A5.4 5.4 0 0 1 10 2Z" fill="#b0b0b0" opacity="1"/></svg>
<svg class="a" style="left:382px;top:704px;" width="12" height="12" viewBox="0 0 12 12"><path d="M6 0.7L11.3 3.3V8.7L6 11.3L0.7 8.7V3.3Z M0.7 3.3L6 6L11.3 3.3M6 6V11.3" stroke="#b0b0b0" stroke-width="1.1" fill="none"/></svg>
<div class="a" style="left:408px;top:705px;width:1px;height:10px;background:#3a3a3a;"></div>
<div class="t" style="left:415px;top:709px;font-size:9.2px;color:#a5a5a5;">Parent &amp; Link</div>
<div class="a" style="left:526px;top:705px;width:1px;height:10px;background:#3a3a3a;"></div>
<svg width="0" height="0" style="position:absolute"><filter id="nz" x="0" y="0" width="100%" height="100%"><feTurbulence type="fractalNoise" baseFrequency="0.9" numOctaves="2" seed="3"/><feColorMatrix type="matrix" values="0 0 0 0 0  0 0 0 0 0  0 0 0 0 0  0 0 0 -2.2 1.5"/></filter></svg>
<div class="a" style="left:10px;top:719px;width:532px;height:16px;background:#444444;"></div>
<div class="a" style="left:10px;top:735px;width:532px;height:1px;background:#1d1d1d;"></div>
<div class="a" style="left:14px;top:720px;width:13px;height:14px;background:#2b2b2b;"></div>
<svg class="a" style="left:13px;top:722px;" width="14" height="9" viewBox="0 0 14 9"><path d="M0.5 4.5Q7 -2 13.5 4.5Q7 11 0.5 4.5Z" fill="#c0c0c0"/><circle cx="7" cy="4.5" r="2.3" fill="#2a2a2a"/></svg>
<div class="a" style="left:44px;top:720px;width:13px;height:14px;background:#333333;"></div>
<div class="a" style="left:59px;top:720px;width:13px;height:14px;background:#333333;"></div>
<svg class="a" style="left:83px;top:724px;" width="9" height="6" viewBox="0 0 9 6"><path d="M0.5 0.8L4.5 4.8L8.5 0.8" stroke="#b0b0b0" stroke-width="1.1" fill="none"/></svg>
<div class="a" style="left:95px;top:721px;width:12px;height:12px;background:#a8987a;"></div>
<div class="t" style="left:117px;top:725px;font-size:11.5px;color:#b8b8b8;">1</div>
<svg class="a" style="left:144px;top:721px;" width="16" height="13" viewBox="0 0 16 13"><rect x="0.5" y="0.5" width="15" height="12" fill="#a0a0a0" stroke="#c8c8c8"/><rect x="1" y="1" width="2" height="11" fill="#3c3c3c"/><rect x="13" y="1" width="2" height="11" fill="#3c3c3c"/><path d="M2 1.5V3M2 4.5V6M2 7.5V9M2 10.5V12M14 1.5V3M14 4.5V6M14 7.5V9M14 10.5V12" stroke="#c8c8c8" stroke-width="1"/><rect x="3" y="10.5" width="10" height="1" fill="#505050"/><path d="M8 5.2L12 4.4V8.8L9.2 9.6Z" fill="#e83232"/><path d="M4.8 9.8L7.8 6L10.8 9.8Z" fill="#17a21a"/><circle cx="6.2" cy="4.6" r="1.9" fill="#2f8ae8"/></svg>
<div class="a" style="left:161px;top:719px;width:111px;height:16px;background:#444444;border:2px solid #a0a0a0;"></div>
<div class="t" style="left:166px;top:726px;font-size:11.5px;color:#c8c8c8;">Frame 01</div>
<div class="a" style="left:277px;top:720px;width:13px;height:14px;background:#333333;"></div>
<svg class="a" style="left:277px;top:721px;" width="13" height="12" viewBox="0 0 13 12"><path d="M1.5 6A5 5 0 0 1 11.5 6Z" fill="#c0c0c0"/><rect x="0" y="8" width="13" height="1.2" fill="#c0c0c0"/><rect x="6" y="2" width="1.4" height="10" fill="#c0c0c0"/><circle cx="4.3" cy="4.6" r="1" fill="#232323"/><circle cx="8.7" cy="4.6" r="1" fill="#232323"/><rect x="2" y="10" width="9" height="1.2" fill="#c0c0c0"/></svg>
<div class="a" style="left:292px;top:720px;width:13px;height:14px;background:#333333;"></div>
<div class="a" style="left:307px;top:720px;width:13px;height:14px;background:#333333;"></div>
<svg class="a" style="left:308px;top:721px;" width="11" height="12" viewBox="0 0 11 12"><path d="M1 11L10 1" stroke="#c0c0c0" stroke-width="1.3"/></svg>
<div class="a" style="left:352px;top:720px;width:13px;height:14px;background:#333333;"></div>
<div class="a" style="left:367px;top:720px;width:13px;height:14px;background:#333333;"></div>
<div class="a" style="left:382px;top:720px;width:13px;height:14px;background:#333333;"></div>
<div class="a" style="left:433px;top:720px;width:89px;height:14px;background:#1c1c1c;"></div>
<svg class="a" style="left:414px;top:721px;" width="12" height="12" viewBox="0 0 12 12"><path d="M7.41 7.25 L7.54 7.10 L7.65 6.93 L7.75 6.74 L7.82 6.54 L7.86 6.32 L7.88 6.10 L7.87 5.86 L7.84 5.62 L7.77 5.39 L7.67 5.16 L7.54 4.93 L7.38 4.72 L7.19 4.53 L6.97 4.35 L6.73 4.20 L6.47 4.08 L6.19 3.98 L5.89 3.93 L5.59 3.90 L5.27 3.91 L4.96 3.97 L4.64 4.06 L4.33 4.19 L4.04 4.36 L3.76 4.57 L3.51 4.81 L3.28 5.09 L3.08 5.39 L2.92 5.73 L2.80 6.08 L2.72 6.46 L2.68 6.85 L2.69 7.24 L2.75 7.64 L2.85 8.03 L3.01 8.42 L3.21 8.79 L3.46 9.14 L3.75 9.46 L4.08 9.75 L4.45 10.00 L4.85 10.21 L5.28 10.37 L5.73 10.48 L6.20 10.54 L6.68 10.54 L7.16 10.49 L7.64 10.37 L8.10 10.20 L8.55 9.98 L8.98 9.70 L9.37 9.36 L9.73 8.98 L10.04 8.56 L10.30 8.09 L10.51 7.59 L10.66 7.07 L10.75 6.52 L10.77 5.96 L10.73 5.40 L10.62 4.83 L10.44 4.28 L10.20 3.75 L9.89 3.25 L9.53 2.78 L9.10 2.35 L8.62 1.97 L8.10 1.64 L7.53 1.38 L6.94 1.18" stroke="#b0b0b0" stroke-width="1.1" fill="none"/></svg>
<div class="t" style="left:440px;top:726px;font-size:11.5px;color:#c8c8c8;">None</div>
<svg class="a" style="left:508px;top:725px;" width="9" height="5" viewBox="0 0 9 5"><path d="M0.5 0.5L4.5 4.5L8.5 0.5" stroke="#b0b0b0" stroke-width="1.2" fill="none"/></svg>
<div class="a" style="left:543px;top:719px;width:1034px;height:16px;background:#4a4a4a;"></div>
<div class="a" style="left:543px;top:735px;width:1034px;height:1px;background:#1d1d1d;"></div>
<svg class="a" style="left:551px;top:719px" width="1019" height="16"><defs><clipPath id="bc719"><path d="M0 7A6 6 0 0 1 6 1H1013A6 6 0 0 1 1019 7V16H0Z"/></clipPath></defs><rect width="1019" height="1" fill="#d6cab0"/><rect y="1" width="8" height="7" fill="#0e0e0e"/><rect x="1011" y="1" width="8" height="7" fill="#0e0e0e"/><g clip-path="url(#bc719)"><rect width="1019" height="16" fill="#a59778"/><rect width="1019" height="16" fill="#000" filter="url(#nz)" opacity="0.13"/></g><rect y="15" width="1019" height="1" fill="#8a7d62"/></svg>
<div class="a" style="left:1577px;top:719px;width:1px;height:17px;background:#1a1a1a;"></div>
<div class="a" style="left:10px;top:736px;width:532px;height:16px;background:#262626;"></div>
<div class="a" style="left:10px;top:752px;width:532px;height:1px;background:#1d1d1d;"></div>
<svg class="a" style="left:100px;top:741px;" width="9" height="6" viewBox="0 0 9 6"><path d="M0.5 0.8L4.5 4.8L8.5 0.8" stroke="#b0b0b0" stroke-width="1.1" fill="none"/></svg>
<div class="t" style="left:117px;top:744px;font-size:11.3px;color:#b0b0b0;">Transform</div>
<div class="t" style="left:278px;top:744px;font-size:10.3px;color:#2d8ceb;"><span style="color:#2d8ceb">Reset</span></div>
<div class="a" style="left:543px;top:736px;width:1034px;height:16px;background:#333333;"></div>
<div class="a" style="left:543px;top:752px;width:1034px;height:1px;background:#262626;"></div>
<svg class="a" style="left:546px;top:739px;" width="8" height="12" viewBox="0 0 8 12"><path d="M0.5 0.8H7.5M0.5 11.2H7.5" stroke="#c8c8c8" stroke-width="1.3"/><rect x="3" y="0.5" width="2.2" height="11" fill="#c8c8c8"/></svg>
<div class="a" style="left:1577px;top:736px;width:1px;height:17px;background:#1a1a1a;"></div>
<div class="a" style="left:10px;top:753px;width:532px;height:16px;background:#262626;"></div>
<div class="a" style="left:10px;top:769px;width:532px;height:1px;background:#1d1d1d;"></div>
<svg class="a" style="left:130px;top:754px;" width="13" height="14" viewBox="0 0 13 14"><circle cx="6.5" cy="8" r="5.2" fill="none" stroke="#b8b8b8" stroke-width="1.2"/><path d="M4.8 1.2H8.2M6.5 1.2V2.8" stroke="#b8b8b8" stroke-width="1.2"/><path d="M1 3.6L2.4 4.8" stroke="#b8b8b8" stroke-width="1.2"/></svg>
<div class="t" style="left:150px;top:761px;font-size:11.3px;color:#b0b0b0;">Anchor Point</div>
<div class="t" style="left:278px;top:761px;font-size:10.3px;color:#2d8ceb;">540,0 ,960,0</div>
<svg class="a" style="left:428px;top:755px;" width="12" height="12" viewBox="0 0 12 12"><path d="M7.41 7.25 L7.54 7.10 L7.65 6.93 L7.75 6.74 L7.82 6.54 L7.86 6.32 L7.88 6.10 L7.87 5.86 L7.84 5.62 L7.77 5.39 L7.67 5.16 L7.54 4.93 L7.38 4.72 L7.19 4.53 L6.97 4.35 L6.73 4.20 L6.47 4.08 L6.19 3.98 L5.89 3.93 L5.59 3.90 L5.27 3.91 L4.96 3.97 L4.64 4.06 L4.33 4.19 L4.04 4.36 L3.76 4.57 L3.51 4.81 L3.28 5.09 L3.08 5.39 L2.92 5.73 L2.80 6.08 L2.72 6.46 L2.68 6.85 L2.69 7.24 L2.75 7.64 L2.85 8.03 L3.01 8.42 L3.21 8.79 L3.46 9.14 L3.75 9.46 L4.08 9.75 L4.45 10.00 L4.85 10.21 L5.28 10.37 L5.73 10.48 L6.20 10.54 L6.68 10.54 L7.16 10.49 L7.64 10.37 L8.10 10.20 L8.55 9.98 L8.98 9.70 L9.37 9.36 L9.73 8.98 L10.04 8.56 L10.30 8.09 L10.51 7.59 L10.66 7.07 L10.75 6.52 L10.77 5.96 L10.73 5.40 L10.62 4.83 L10.44 4.28 L10.20 3.75 L9.89 3.25 L9.53 2.78 L9.10 2.35 L8.62 1.97 L8.10 1.64 L7.53 1.38 L6.94 1.18" stroke="#b0b0b0" stroke-width="1.1" fill="none"/></svg>
<div class="a" style="left:543px;top:753px;width:1034px;height:16px;background:#333333;"></div>
<div class="a" style="left:543px;top:769px;width:1034px;height:1px;background:#262626;"></div>
<svg class="a" style="left:546px;top:756px;" width="8" height="12" viewBox="0 0 8 12"><path d="M0.5 0.8H7.5M0.5 11.2H7.5" stroke="#c8c8c8" stroke-width="1.3"/><rect x="3" y="0.5" width="2.2" height="11" fill="#c8c8c8"/></svg>
<div class="a" style="left:1577px;top:753px;width:1px;height:17px;background:#1a1a1a;"></div>
<div class="a" style="left:10px;top:770px;width:532px;height:16px;background:#262626;"></div>
<div class="a" style="left:10px;top:786px;width:532px;height:1px;background:#1d1d1d;"></div>
<svg class="a" style="left:130px;top:771px;" width="13" height="14" viewBox="0 0 13 14"><circle cx="6.5" cy="8" r="5.2" fill="none" stroke="#b8b8b8" stroke-width="1.2"/><path d="M4.8 1.2H8.2M6.5 1.2V2.8" stroke="#b8b8b8" stroke-width="1.2"/><path d="M1 3.6L2.4 4.8" stroke="#b8b8b8" stroke-width="1.2"/></svg>
<div class="t" style="left:150px;top:778px;font-size:11.3px;color:#b0b0b0;">Position</div>
<div class="t" style="left:278px;top:778px;font-size:10.3px;color:#2d8ceb;">1500,0 ,540,0</div>
<svg class="a" style="left:428px;top:772px;" width="12" height="12" viewBox="0 0 12 12"><path d="M7.41 7.25 L7.54 7.10 L7.65 6.93 L7.75 6.74 L7.82 6.54 L7.86 6.32 L7.88 6.10 L7.87 5.86 L7.84 5.62 L7.77 5.39 L7.67 5.16 L7.54 4.93 L7.38 4.72 L7.19 4.53 L6.97 4.35 L6.73 4.20 L6.47 4.08 L6.19 3.98 L5.89 3.93 L5.59 3.90 L5.27 3.91 L4.96 3.97 L4.64 4.06 L4.33 4.19 L4.04 4.36 L3.76 4.57 L3.51 4.81 L3.28 5.09 L3.08 5.39 L2.92 5.73 L2.80 6.08 L2.72 6.46 L2.68 6.85 L2.69 7.24 L2.75 7.64 L2.85 8.03 L3.01 8.42 L3.21 8.79 L3.46 9.14 L3.75 9.46 L4.08 9.75 L4.45 10.00 L4.85 10.21 L5.28 10.37 L5.73 10.48 L6.20 10.54 L6.68 10.54 L7.16 10.49 L7.64 10.37 L8.10 10.20 L8.55 9.98 L8.98 9.70 L9.37 9.36 L9.73 8.98 L10.04 8.56 L10.30 8.09 L10.51 7.59 L10.66 7.07 L10.75 6.52 L10.77 5.96 L10.73 5.40 L10.62 4.83 L10.44 4.28 L10.20 3.75 L9.89 3.25 L9.53 2.78 L9.10 2.35 L8.62 1.97 L8.10 1.64 L7.53 1.38 L6.94 1.18" stroke="#b0b0b0" stroke-width="1.1" fill="none"/></svg>
<div class="a" style="left:543px;top:770px;width:1034px;height:16px;background:#333333;"></div>
<div class="a" style="left:543px;top:786px;width:1034px;height:1px;background:#262626;"></div>
<svg class="a" style="left:546px;top:773px;" width="8" height="12" viewBox="0 0 8 12"><path d="M0.5 0.8H7.5M0.5 11.2H7.5" stroke="#c8c8c8" stroke-width="1.3"/><rect x="3" y="0.5" width="2.2" height="11" fill="#c8c8c8"/></svg>
<div class="a" style="left:1577px;top:770px;width:1px;height:17px;background:#1a1a1a;"></div>
<div class="a" style="left:10px;top:787px;width:532px;height:16px;background:#262626;"></div>
<div class="a" style="left:10px;top:803px;width:532px;height:1px;background:#1d1d1d;"></div>
<svg class="a" style="left:130px;top:788px;" width="13" height="14" viewBox="0 0 13 14"><circle cx="6.5" cy="8" r="5.2" fill="none" stroke="#b8b8b8" stroke-width="1.2"/><path d="M4.8 1.2H8.2M6.5 1.2V2.8" stroke="#b8b8b8" stroke-width="1.2"/><path d="M1 3.6L2.4 4.8" stroke="#b8b8b8" stroke-width="1.2"/></svg>
<div class="t" style="left:150px;top:795px;font-size:11.3px;color:#b0b0b0;">Scale</div>
<svg class="a" style="left:428px;top:789px;" width="12" height="12" viewBox="0 0 12 12"><path d="M7.41 7.25 L7.54 7.10 L7.65 6.93 L7.75 6.74 L7.82 6.54 L7.86 6.32 L7.88 6.10 L7.87 5.86 L7.84 5.62 L7.77 5.39 L7.67 5.16 L7.54 4.93 L7.38 4.72 L7.19 4.53 L6.97 4.35 L6.73 4.20 L6.47 4.08 L6.19 3.98 L5.89 3.93 L5.59 3.90 L5.27 3.91 L4.96 3.97 L4.64 4.06 L4.33 4.19 L4.04 4.36 L3.76 4.57 L3.51 4.81 L3.28 5.09 L3.08 5.39 L2.92 5.73 L2.80 6.08 L2.72 6.46 L2.68 6.85 L2.69 7.24 L2.75 7.64 L2.85 8.03 L3.01 8.42 L3.21 8.79 L3.46 9.14 L3.75 9.46 L4.08 9.75 L4.45 10.00 L4.85 10.21 L5.28 10.37 L5.73 10.48 L6.20 10.54 L6.68 10.54 L7.16 10.49 L7.64 10.37 L8.10 10.20 L8.55 9.98 L8.98 9.70 L9.37 9.36 L9.73 8.98 L10.04 8.56 L10.30 8.09 L10.51 7.59 L10.66 7.07 L10.75 6.52 L10.77 5.96 L10.73 5.40 L10.62 4.83 L10.44 4.28 L10.20 3.75 L9.89 3.25 L9.53 2.78 L9.10 2.35 L8.62 1.97 L8.10 1.64 L7.53 1.38 L6.94 1.18" stroke="#b0b0b0" stroke-width="1.1" fill="none"/></svg>
<div class="a" style="left:543px;top:787px;width:1034px;height:16px;background:#333333;"></div>
<div class="a" style="left:543px;top:803px;width:1034px;height:1px;background:#262626;"></div>
<svg class="a" style="left:546px;top:790px;" width="8" height="12" viewBox="0 0 8 12"><path d="M0.5 0.8H7.5M0.5 11.2H7.5" stroke="#c8c8c8" stroke-width="1.3"/><rect x="3" y="0.5" width="2.2" height="11" fill="#c8c8c8"/></svg>
<div class="a" style="left:1577px;top:787px;width:1px;height:17px;background:#1a1a1a;"></div>
<div class="a" style="left:10px;top:804px;width:532px;height:16px;background:#262626;"></div>
<div class="a" style="left:10px;top:820px;width:532px;height:1px;background:#1d1d1d;"></div>
<svg class="a" style="left:130px;top:805px;" width="13" height="14" viewBox="0 0 13 14"><circle cx="6.5" cy="8" r="5.2" fill="none" stroke="#b8b8b8" stroke-width="1.2"/><path d="M4.8 1.2H8.2M6.5 1.2V2.8" stroke="#b8b8b8" stroke-width="1.2"/><path d="M1 3.6L2.4 4.8" stroke="#b8b8b8" stroke-width="1.2"/></svg>
<div class="t" style="left:150px;top:812px;font-size:11.3px;color:#b0b0b0;">Rotation</div>
<div class="t" style="left:278px;top:812px;font-size:10.3px;color:#2d8ceb;">0 x+0,0 °</div>
<svg class="a" style="left:428px;top:806px;" width="12" height="12" viewBox="0 0 12 12"><path d="M7.41 7.25 L7.54 7.10 L7.65 6.93 L7.75 6.74 L7.82 6.54 L7.86 6.32 L7.88 6.10 L7.87 5.86 L7.84 5.62 L7.77 5.39 L7.67 5.16 L7.54 4.93 L7.38 4.72 L7.19 4.53 L6.97 4.35 L6.73 4.20 L6.47 4.08 L6.19 3.98 L5.89 3.93 L5.59 3.90 L5.27 3.91 L4.96 3.97 L4.64 4.06 L4.33 4.19 L4.04 4.36 L3.76 4.57 L3.51 4.81 L3.28 5.09 L3.08 5.39 L2.92 5.73 L2.80 6.08 L2.72 6.46 L2.68 6.85 L2.69 7.24 L2.75 7.64 L2.85 8.03 L3.01 8.42 L3.21 8.79 L3.46 9.14 L3.75 9.46 L4.08 9.75 L4.45 10.00 L4.85 10.21 L5.28 10.37 L5.73 10.48 L6.20 10.54 L6.68 10.54 L7.16 10.49 L7.64 10.37 L8.10 10.20 L8.55 9.98 L8.98 9.70 L9.37 9.36 L9.73 8.98 L10.04 8.56 L10.30 8.09 L10.51 7.59 L10.66 7.07 L10.75 6.52 L10.77 5.96 L10.73 5.40 L10.62 4.83 L10.44 4.28 L10.20 3.75 L9.89 3.25 L9.53 2.78 L9.10 2.35 L8.62 1.97 L8.10 1.64 L7.53 1.38 L6.94 1.18" stroke="#b0b0b0" stroke-width="1.1" fill="none"/></svg>
<div class="a" style="left:543px;top:804px;width:1034px;height:16px;background:#333333;"></div>
<div class="a" style="left:543px;top:820px;width:1034px;height:1px;background:#262626;"></div>
<svg class="a" style="left:546px;top:807px;" width="8" height="12" viewBox="0 0 8 12"><path d="M0.5 0.8H7.5M0.5 11.2H7.5" stroke="#c8c8c8" stroke-width="1.3"/><rect x="3" y="0.5" width="2.2" height="11" fill="#c8c8c8"/></svg>
<div class="a" style="left:1577px;top:804px;width:1px;height:17px;background:#1a1a1a;"></div>
<div class="a" style="left:10px;top:821px;width:532px;height:16px;background:#262626;"></div>
<div class="a" style="left:10px;top:837px;width:532px;height:1px;background:#1d1d1d;"></div>
<svg class="a" style="left:130px;top:822px;" width="13" height="14" viewBox="0 0 13 14"><circle cx="6.5" cy="8" r="5.2" fill="none" stroke="#b8b8b8" stroke-width="1.2"/><path d="M4.8 1.2H8.2M6.5 1.2V2.8" stroke="#b8b8b8" stroke-width="1.2"/><path d="M1 3.6L2.4 4.8" stroke="#b8b8b8" stroke-width="1.2"/></svg>
<div class="t" style="left:150px;top:829px;font-size:11.3px;color:#b0b0b0;">Opacity</div>
<div class="t" style="left:278px;top:829px;font-size:10.3px;color:#2d8ceb;">100 <span style="color:#a5a5a5">%</span></div>
<svg class="a" style="left:428px;top:823px;" width="12" height="12" viewBox="0 0 12 12"><path d="M7.41 7.25 L7.54 7.10 L7.65 6.93 L7.75 6.74 L7.82 6.54 L7.86 6.32 L7.88 6.10 L7.87 5.86 L7.84 5.62 L7.77 5.39 L7.67 5.16 L7.54 4.93 L7.38 4.72 L7.19 4.53 L6.97 4.35 L6.73 4.20 L6.47 4.08 L6.19 3.98 L5.89 3.93 L5.59 3.90 L5.27 3.91 L4.96 3.97 L4.64 4.06 L4.33 4.19 L4.04 4.36 L3.76 4.57 L3.51 4.81 L3.28 5.09 L3.08 5.39 L2.92 5.73 L2.80 6.08 L2.72 6.46 L2.68 6.85 L2.69 7.24 L2.75 7.64 L2.85 8.03 L3.01 8.42 L3.21 8.79 L3.46 9.14 L3.75 9.46 L4.08 9.75 L4.45 10.00 L4.85 10.21 L5.28 10.37 L5.73 10.48 L6.20 10.54 L6.68 10.54 L7.16 10.49 L7.64 10.37 L8.10 10.20 L8.55 9.98 L8.98 9.70 L9.37 9.36 L9.73 8.98 L10.04 8.56 L10.30 8.09 L10.51 7.59 L10.66 7.07 L10.75 6.52 L10.77 5.96 L10.73 5.40 L10.62 4.83 L10.44 4.28 L10.20 3.75 L9.89 3.25 L9.53 2.78 L9.10 2.35 L8.62 1.97 L8.10 1.64 L7.53 1.38 L6.94 1.18" stroke="#b0b0b0" stroke-width="1.1" fill="none"/></svg>
<div class="a" style="left:543px;top:821px;width:1034px;height:16px;background:#333333;"></div>
<div class="a" style="left:543px;top:837px;width:1034px;height:1px;background:#262626;"></div>
<svg class="a" style="left:546px;top:824px;" width="8" height="12" viewBox="0 0 8 12"><path d="M0.5 0.8H7.5M0.5 11.2H7.5" stroke="#c8c8c8" stroke-width="1.3"/><rect x="3" y="0.5" width="2.2" height="11" fill="#c8c8c8"/></svg>
<div class="a" style="left:1577px;top:821px;width:1px;height:17px;background:#1a1a1a;"></div>
<div class="a" style="left:10px;top:838px;width:532px;height:16px;background:#444444;"></div>
<div class="a" style="left:10px;top:854px;width:532px;height:1px;background:#1d1d1d;"></div>
<div class="a" style="left:14px;top:839px;width:13px;height:14px;background:#2b2b2b;"></div>
<svg class="a" style="left:13px;top:841px;" width="14" height="9" viewBox="0 0 14 9"><path d="M0.5 4.5Q7 -2 13.5 4.5Q7 11 0.5 4.5Z" fill="#c0c0c0"/><circle cx="7" cy="4.5" r="2.3" fill="#2a2a2a"/></svg>
<div class="a" style="left:44px;top:839px;width:13px;height:14px;background:#333333;"></div>
<div class="a" style="left:59px;top:839px;width:13px;height:14px;background:#333333;"></div>
<svg class="a" style="left:83px;top:843px;" width="9" height="6" viewBox="0 0 9 6"><path d="M0.5 0.8L4.5 4.8L8.5 0.8" stroke="#b0b0b0" stroke-width="1.1" fill="none"/></svg>
<div class="a" style="left:95px;top:840px;width:12px;height:12px;background:#a8987a;"></div>
<div class="t" style="left:117px;top:844px;font-size:11.5px;color:#b8b8b8;">2</div>
<svg class="a" style="left:144px;top:840px;" width="16" height="13" viewBox="0 0 16 13"><rect x="0.5" y="0.5" width="15" height="12" fill="#a0a0a0" stroke="#c8c8c8"/><rect x="1" y="1" width="2" height="11" fill="#3c3c3c"/><rect x="13" y="1" width="2" height="11" fill="#3c3c3c"/><path d="M2 1.5V3M2 4.5V6M2 7.5V9M2 10.5V12M14 1.5V3M14 4.5V6M14 7.5V9M14 10.5V12" stroke="#c8c8c8" stroke-width="1"/><rect x="3" y="10.5" width="10" height="1" fill="#505050"/><path d="M8 5.2L12 4.4V8.8L9.2 9.6Z" fill="#e83232"/><path d="M4.8 9.8L7.8 6L10.8 9.8Z" fill="#17a21a"/><circle cx="6.2" cy="4.6" r="1.9" fill="#2f8ae8"/></svg>
<div class="a" style="left:161px;top:838px;width:111px;height:16px;background:#444444;border:2px solid #a0a0a0;"></div>
<div class="t" style="left:166px;top:845px;font-size:11.5px;color:#c8c8c8;">Frame 02</div>
<div class="a" style="left:277px;top:839px;width:13px;height:14px;background:#333333;"></div>
<svg class="a" style="left:277px;top:840px;" width="13" height="12" viewBox="0 0 13 12"><path d="M1.5 6A5 5 0 0 1 11.5 6Z" fill="#c0c0c0"/><rect x="0" y="8" width="13" height="1.2" fill="#c0c0c0"/><rect x="6" y="2" width="1.4" height="10" fill="#c0c0c0"/><circle cx="4.3" cy="4.6" r="1" fill="#232323"/><circle cx="8.7" cy="4.6" r="1" fill="#232323"/><rect x="2" y="10" width="9" height="1.2" fill="#c0c0c0"/></svg>
<div class="a" style="left:292px;top:839px;width:13px;height:14px;background:#333333;"></div>
<div class="a" style="left:307px;top:839px;width:13px;height:14px;background:#333333;"></div>
<svg class="a" style="left:308px;top:840px;" width="11" height="12" viewBox="0 0 11 12"><path d="M1 11L10 1" stroke="#c0c0c0" stroke-width="1.3"/></svg>
<div class="a" style="left:352px;top:839px;width:13px;height:14px;background:#333333;"></div>
<div class="a" style="left:367px;top:839px;width:13px;height:14px;background:#333333;"></div>
<div class="a" style="left:382px;top:839px;width:13px;height:14px;background:#333333;"></div>
<div class="a" style="left:433px;top:839px;width:89px;height:14px;background:#1c1c1c;"></div>
<svg class="a" style="left:414px;top:840px;" width="12" height="12" viewBox="0 0 12 12"><path d="M7.41 7.25 L7.54 7.10 L7.65 6.93 L7.75 6.74 L7.82 6.54 L7.86 6.32 L7.88 6.10 L7.87 5.86 L7.84 5.62 L7.77 5.39 L7.67 5.16 L7.54 4.93 L7.38 4.72 L7.19 4.53 L6.97 4.35 L6.73 4.20 L6.47 4.08 L6.19 3.98 L5.89 3.93 L5.59 3.90 L5.27 3.91 L4.96 3.97 L4.64 4.06 L4.33 4.19 L4.04 4.36 L3.76 4.57 L3.51 4.81 L3.28 5.09 L3.08 5.39 L2.92 5.73 L2.80 6.08 L2.72 6.46 L2.68 6.85 L2.69 7.24 L2.75 7.64 L2.85 8.03 L3.01 8.42 L3.21 8.79 L3.46 9.14 L3.75 9.46 L4.08 9.75 L4.45 10.00 L4.85 10.21 L5.28 10.37 L5.73 10.48 L6.20 10.54 L6.68 10.54 L7.16 10.49 L7.64 10.37 L8.10 10.20 L8.55 9.98 L8.98 9.70 L9.37 9.36 L9.73 8.98 L10.04 8.56 L10.30 8.09 L10.51 7.59 L10.66 7.07 L10.75 6.52 L10.77 5.96 L10.73 5.40 L10.62 4.83 L10.44 4.28 L10.20 3.75 L9.89 3.25 L9.53 2.78 L9.10 2.35 L8.62 1.97 L8.10 1.64 L7.53 1.38 L6.94 1.18" stroke="#b0b0b0" stroke-width="1.1" fill="none"/></svg>
<div class="t" style="left:440px;top:845px;font-size:11.5px;color:#c8c8c8;">None</div>
<svg class="a" style="left:508px;top:844px;" width="9" height="5" viewBox="0 0 9 5"><path d="M0.5 0.5L4.5 4.5L8.5 0.5" stroke="#b0b0b0" stroke-width="1.2" fill="none"/></svg>
<div class="a" style="left:543px;top:838px;width:1034px;height:16px;background:#4a4a4a;"></div>
<div class="a" style="left:543px;top:854px;width:1034px;height:1px;background:#1d1d1d;"></div>
<svg class="a" style="left:551px;top:838px" width="1019" height="16"><defs><clipPath id="bc838"><path d="M0 7A6 6 0 0 1 6 1H1013A6 6 0 0 1 1019 7V16H0Z"/></clipPath></defs><rect width="1019" height="1" fill="#d6cab0"/><rect y="1" width="8" height="7" fill="#0e0e0e"/><rect x="1011" y="1" width="8" height="7" fill="#0e0e0e"/><g clip-path="url(#bc838)"><rect width="1019" height="16" fill="#a59778"/><rect width="1019" height="16" fill="#000" filter="url(#nz)" opacity="0.13"/></g><rect y="15" width="1019" height="1" fill="#8a7d62"/></svg>
<div class="a" style="left:1577px;top:838px;width:1px;height:17px;background:#1a1a1a;"></div>
<div class="a" style="left:10px;top:855px;width:532px;height:16px;background:#262626;"></div>
<div class="a" style="left:10px;top:871px;width:532px;height:1px;background:#1d1d1d;"></div>
<svg class="a" style="left:100px;top:858px;" width="6" height="9" viewBox="0 0 6 9"><path d="M0.8 0.5L4.8 4.5L0.8 8.5" stroke="#b0b0b0" stroke-width="1.1" fill="none"/></svg>
<div class="t" style="left:117px;top:863px;font-size:11.3px;color:#b0b0b0;">Transform</div>
<div class="t" style="left:278px;top:863px;font-size:10.3px;color:#2d8ceb;"><span style="color:#2d8ceb">Reset</span></div>
<div class="a" style="left:543px;top:855px;width:1034px;height:16px;background:#333333;"></div>
<div class="a" style="left:543px;top:871px;width:1034px;height:1px;background:#262626;"></div>
<svg class="a" style="left:546px;top:858px;" width="8" height="12" viewBox="0 0 8 12"><path d="M0.5 0.8H7.5M0.5 11.2H7.5" stroke="#c8c8c8" stroke-width="1.3"/><rect x="3" y="0.5" width="2.2" height="11" fill="#c8c8c8"/></svg>
<div class="a" style="left:1577px;top:855px;width:1px;height:17px;background:#1a1a1a;"></div>
<div class="a" style="left:10px;top:872px;width:532px;height:16px;background:#444444;"></div>
<div class="a" style="left:10px;top:888px;width:532px;height:1px;background:#1d1d1d;"></div>
<div class="a" style="left:14px;top:873px;width:13px;height:14px;background:#2b2b2b;"></div>
<svg class="a" style="left:13px;top:875px;" width="14" height="9" viewBox="0 0 14 9"><path d="M0.5 4.5Q7 -2 13.5 4.5Q7 11 0.5 4.5Z" fill="#c0c0c0"/><circle cx="7" cy="4.5" r="2.3" fill="#2a2a2a"/></svg>
<div class="a" style="left:44px;top:873px;width:13px;height:14px;background:#333333;"></div>
<div class="a" style="left:59px;top:873px;width:13px;height:14px;background:#333333;"></div>
<svg class="a" style="left:83px;top:877px;" width="9" height="6" viewBox="0 0 9 6"><path d="M0.5 0.8L4.5 4.8L8.5 0.8" stroke="#b0b0b0" stroke-width="1.1" fill="none"/></svg>
<div class="a" style="left:95px;top:874px;width:12px;height:12px;background:#a8987a;"></div>
<div class="t" style="left:117px;top:878px;font-size:11.5px;color:#b8b8b8;">3</div>
<svg class="a" style="left:144px;top:874px;" width="16" height="13" viewBox="0 0 16 13"><rect x="0.5" y="0.5" width="15" height="12" fill="#a0a0a0" stroke="#c8c8c8"/><rect x="1" y="1" width="2" height="11" fill="#3c3c3c"/><rect x="13" y="1" width="2" height="11" fill="#3c3c3c"/><path d="M2 1.5V3M2 4.5V6M2 7.5V9M2 10.5V12M14 1.5V3M14 4.5V6M14 7.5V9M14 10.5V12" stroke="#c8c8c8" stroke-width="1"/><rect x="3" y="10.5" width="10" height="1" fill="#505050"/><path d="M8 5.2L12 4.4V8.8L9.2 9.6Z" fill="#e83232"/><path d="M4.8 9.8L7.8 6L10.8 9.8Z" fill="#17a21a"/><circle cx="6.2" cy="4.6" r="1.9" fill="#2f8ae8"/></svg>
<div class="a" style="left:161px;top:872px;width:111px;height:16px;background:#444444;border:2px solid #a0a0a0;"></div>
<div class="t" style="left:166px;top:879px;font-size:11.5px;color:#c8c8c8;">Frame 03</div>
<div class="a" style="left:277px;top:873px;width:13px;height:14px;background:#333333;"></div>
<svg class="a" style="left:277px;top:874px;" width="13" height="12" viewBox="0 0 13 12"><path d="M1.5 6A5 5 0 0 1 11.5 6Z" fill="#c0c0c0"/><rect x="0" y="8" width="13" height="1.2" fill="#c0c0c0"/><rect x="6" y="2" width="1.4" height="10" fill="#c0c0c0"/><circle cx="4.3" cy="4.6" r="1" fill="#232323"/><circle cx="8.7" cy="4.6" r="1" fill="#232323"/><rect x="2" y="10" width="9" height="1.2" fill="#c0c0c0"/></svg>
<div class="a" style="left:292px;top:873px;width:13px;height:14px;background:#333333;"></div>
<div class="a" style="left:307px;top:873px;width:13px;height:14px;background:#333333;"></div>
<svg class="a" style="left:308px;top:874px;" width="11" height="12" viewBox="0 0 11 12"><path d="M1 11L10 1" stroke="#c0c0c0" stroke-width="1.3"/></svg>
<div class="a" style="left:352px;top:873px;width:13px;height:14px;background:#333333;"></div>
<div class="a" style="left:367px;top:873px;width:13px;height:14px;background:#333333;"></div>
<div class="a" style="left:382px;top:873px;width:13px;height:14px;background:#333333;"></div>
<div class="a" style="left:433px;top:873px;width:89px;height:14px;background:#1c1c1c;"></div>
<svg class="a" style="left:414px;top:874px;" width="12" height="12" viewBox="0 0 12 12"><path d="M7.41 7.25 L7.54 7.10 L7.65 6.93 L7.75 6.74 L7.82 6.54 L7.86 6.32 L7.88 6.10 L7.87 5.86 L7.84 5.62 L7.77 5.39 L7.67 5.16 L7.54 4.93 L7.38 4.72 L7.19 4.53 L6.97 4.35 L6.73 4.20 L6.47 4.08 L6.19 3.98 L5.89 3.93 L5.59 3.90 L5.27 3.91 L4.96 3.97 L4.64 4.06 L4.33 4.19 L4.04 4.36 L3.76 4.57 L3.51 4.81 L3.28 5.09 L3.08 5.39 L2.92 5.73 L2.80 6.08 L2.72 6.46 L2.68 6.85 L2.69 7.24 L2.75 7.64 L2.85 8.03 L3.01 8.42 L3.21 8.79 L3.46 9.14 L3.75 9.46 L4.08 9.75 L4.45 10.00 L4.85 10.21 L5.28 10.37 L5.73 10.48 L6.20 10.54 L6.68 10.54 L7.16 10.49 L7.64 10.37 L8.10 10.20 L8.55 9.98 L8.98 9.70 L9.37 9.36 L9.73 8.98 L10.04 8.56 L10.30 8.09 L10.51 7.59 L10.66 7.07 L10.75 6.52 L10.77 5.96 L10.73 5.40 L10.62 4.83 L10.44 4.28 L10.20 3.75 L9.89 3.25 L9.53 2.78 L9.10 2.35 L8.62 1.97 L8.10 1.64 L7.53 1.38 L6.94 1.18" stroke="#b0b0b0" stroke-width="1.1" fill="none"/></svg>
<div class="t" style="left:440px;top:879px;font-size:11.5px;color:#c8c8c8;">None</div>
<svg class="a" style="left:508px;top:878px;" width="9" height="5" viewBox="0 0 9 5"><path d="M0.5 0.5L4.5 4.5L8.5 0.5" stroke="#b0b0b0" stroke-width="1.2" fill="none"/></svg>
<div class="a" style="left:543px;top:872px;width:1034px;height:16px;background:#4a4a4a;"></div>
<div class="a" style="left:543px;top:888px;width:1034px;height:1px;background:#1d1d1d;"></div>
<svg class="a" style="left:551px;top:872px" width="1019" height="16"><defs><clipPath id="bc872"><path d="M0 7A6 6 0 0 1 6 1H1013A6 6 0 0 1 1019 7V16H0Z"/></clipPath></defs><rect width="1019" height="1" fill="#d6cab0"/><rect y="1" width="8" height="7" fill="#0e0e0e"/><rect x="1011" y="1" width="8" height="7" fill="#0e0e0e"/><g clip-path="url(#bc872)"><rect width="1019" height="16" fill="#a59778"/><rect width="1019" height="16" fill="#000" filter="url(#nz)" opacity="0.13"/></g><rect y="15" width="1019" height="1" fill="#8a7d62"/></svg>
<div class="a" style="left:1577px;top:872px;width:1px;height:17px;background:#1a1a1a;"></div>
<div class="a" style="left:10px;top:889px;width:532px;height:16px;background:#262626;"></div>
<div class="a" style="left:10px;top:905px;width:532px;height:1px;background:#1d1d1d;"></div>
<svg class="a" style="left:100px;top:892px;" width="6" height="9" viewBox="0 0 6 9"><path d="M0.8 0.5L4.8 4.5L0.8 8.5" stroke="#b0b0b0" stroke-width="1.1" fill="none"/></svg>
<div class="t" style="left:117px;top:897px;font-size:11.3px;color:#b0b0b0;">Transform</div>
<div class="t" style="left:278px;top:897px;font-size:10.3px;color:#2d8ceb;"><span style="color:#2d8ceb">Reset</span></div>
<div class="a" style="left:543px;top:889px;width:1034px;height:16px;background:#333333;"></div>
<div class="a" style="left:543px;top:905px;width:1034px;height:1px;background:#262626;"></div>
<svg class="a" style="left:546px;top:892px;" width="8" height="12" viewBox="0 0 8 12"><path d="M0.5 0.8H7.5M0.5 11.2H7.5" stroke="#c8c8c8" stroke-width="1.3"/><rect x="3" y="0.5" width="2.2" height="11" fill="#c8c8c8"/></svg>
<div class="a" style="left:1577px;top:889px;width:1px;height:17px;background:#1a1a1a;"></div>
<div class="a" style="left:10px;top:906px;width:532px;height:16px;background:#444444;"></div>
<div class="a" style="left:10px;top:922px;width:532px;height:1px;background:#1d1d1d;"></div>
<div class="a" style="left:14px;top:907px;width:13px;height:14px;background:#2b2b2b;"></div>
<svg class="a" style="left:13px;top:909px;" width="14" height="9" viewBox="0 0 14 9"><path d="M0.5 4.5Q7 -2 13.5 4.5Q7 11 0.5 4.5Z" fill="#c0c0c0"/><circle cx="7" cy="4.5" r="2.3" fill="#2a2a2a"/></svg>
<div class="a" style="left:44px;top:907px;width:13px;height:14px;background:#333333;"></div>
<div class="a" style="left:59px;top:907px;width:13px;height:14px;background:#333333;"></div>
<svg class="a" style="left:83px;top:911px;" width="9" height="6" viewBox="0 0 9 6"><path d="M0.5 0.8L4.5 4.8L8.5 0.8" stroke="#b0b0b0" stroke-width="1.1" fill="none"/></svg>
<div class="a" style="left:95px;top:908px;width:12px;height:12px;background:#a8987a;"></div>
<div class="t" style="left:117px;top:912px;font-size:11.5px;color:#b8b8b8;">4</div>
<svg class="a" style="left:144px;top:908px;" width="16" height="13" viewBox="0 0 16 13"><rect x="0.5" y="0.5" width="15" height="12" fill="#a0a0a0" stroke="#c8c8c8"/><rect x="1" y="1" width="2" height="11" fill="#3c3c3c"/><rect x="13" y="1" width="2" height="11" fill="#3c3c3c"/><path d="M2 1.5V3M2 4.5V6M2 7.5V9M2 10.5V12M14 1.5V3M14 4.5V6M14 7.5V9M14 10.5V12" stroke="#c8c8c8" stroke-width="1"/><rect x="3" y="10.5" width="10" height="1" fill="#505050"/><path d="M8 5.2L12 4.4V8.8L9.2 9.6Z" fill="#e83232"/><path d="M4.8 9.8L7.8 6L10.8 9.8Z" fill="#17a21a"/><circle cx="6.2" cy="4.6" r="1.9" fill="#2f8ae8"/></svg>
<div class="a" style="left:161px;top:906px;width:111px;height:16px;background:#444444;border:2px solid #a0a0a0;"></div>
<div class="t" style="left:166px;top:913px;font-size:11.5px;color:#c8c8c8;">Frame 04</div>
<div class="a" style="left:277px;top:907px;width:13px;height:14px;background:#333333;"></div>
<svg class="a" style="left:277px;top:908px;" width="13" height="12" viewBox="0 0 13 12"><path d="M1.5 6A5 5 0 0 1 11.5 6Z" fill="#c0c0c0"/><rect x="0" y="8" width="13" height="1.2" fill="#c0c0c0"/><rect x="6" y="2" width="1.4" height="10" fill="#c0c0c0"/><circle cx="4.3" cy="4.6" r="1" fill="#232323"/><circle cx="8.7" cy="4.6" r="1" fill="#232323"/><rect x="2" y="10" width="9" height="1.2" fill="#c0c0c0"/></svg>
<div class="a" style="left:292px;top:907px;width:13px;height:14px;background:#333333;"></div>
<div class="a" style="left:307px;top:907px;width:13px;height:14px;background:#333333;"></div>
<svg class="a" style="left:308px;top:908px;" width="11" height="12" viewBox="0 0 11 12"><path d="M1 11L10 1" stroke="#c0c0c0" stroke-width="1.3"/></svg>
<div class="a" style="left:352px;top:907px;width:13px;height:14px;background:#333333;"></div>
<div class="a" style="left:367px;top:907px;width:13px;height:14px;background:#333333;"></div>
<div class="a" style="left:382px;top:907px;width:13px;height:14px;background:#333333;"></div>
<div class="a" style="left:433px;top:907px;width:89px;height:14px;background:#1c1c1c;"></div>
<svg class="a" style="left:414px;top:908px;" width="12" height="12" viewBox="0 0 12 12"><path d="M7.41 7.25 L7.54 7.10 L7.65 6.93 L7.75 6.74 L7.82 6.54 L7.86 6.32 L7.88 6.10 L7.87 5.86 L7.84 5.62 L7.77 5.39 L7.67 5.16 L7.54 4.93 L7.38 4.72 L7.19 4.53 L6.97 4.35 L6.73 4.20 L6.47 4.08 L6.19 3.98 L5.89 3.93 L5.59 3.90 L5.27 3.91 L4.96 3.97 L4.64 4.06 L4.33 4.19 L4.04 4.36 L3.76 4.57 L3.51 4.81 L3.28 5.09 L3.08 5.39 L2.92 5.73 L2.80 6.08 L2.72 6.46 L2.68 6.85 L2.69 7.24 L2.75 7.64 L2.85 8.03 L3.01 8.42 L3.21 8.79 L3.46 9.14 L3.75 9.46 L4.08 9.75 L4.45 10.00 L4.85 10.21 L5.28 10.37 L5.73 10.48 L6.20 10.54 L6.68 10.54 L7.16 10.49 L7.64 10.37 L8.10 10.20 L8.55 9.98 L8.98 9.70 L9.37 9.36 L9.73 8.98 L10.04 8.56 L10.30 8.09 L10.51 7.59 L10.66 7.07 L10.75 6.52 L10.77 5.96 L10.73 5.40 L10.62 4.83 L10.44 4.28 L10.20 3.75 L9.89 3.25 L9.53 2.78 L9.10 2.35 L8.62 1.97 L8.10 1.64 L7.53 1.38 L6.94 1.18" stroke="#b0b0b0" stroke-width="1.1" fill="none"/></svg>
<div class="t" style="left:440px;top:913px;font-size:11.5px;color:#c8c8c8;">None</div>
<svg class="a" style="left:508px;top:912px;" width="9" height="5" viewBox="0 0 9 5"><path d="M0.5 0.5L4.5 4.5L8.5 0.5" stroke="#b0b0b0" stroke-width="1.2" fill="none"/></svg>
<div class="a" style="left:543px;top:906px;width:1034px;height:16px;background:#4a4a4a;"></div>
<div class="a" style="left:543px;top:922px;width:1034px;height:1px;background:#1d1d1d;"></div>
<svg class="a" style="left:551px;top:906px" width="1019" height="16"><defs><clipPath id="bc906"><path d="M0 7A6 6 0 0 1 6 1H1013A6 6 0 0 1 1019 7V16H0Z"/></clipPath></defs><rect width="1019" height="1" fill="#d6cab0"/><rect y="1" width="8" height="7" fill="#0e0e0e"/><rect x="1011" y="1" width="8" height="7" fill="#0e0e0e"/><g clip-path="url(#bc906)"><rect width="1019" height="16" fill="#a59778"/><rect width="1019" height="16" fill="#000" filter="url(#nz)" opacity="0.13"/></g><rect y="15" width="1019" height="1" fill="#8a7d62"/></svg>
<div class="a" style="left:1577px;top:906px;width:1px;height:17px;background:#1a1a1a;"></div>
<div class="a" style="left:10px;top:923px;width:532px;height:16px;background:#262626;"></div>
<div class="a" style="left:10px;top:939px;width:532px;height:1px;background:#1d1d1d;"></div>
<svg class="a" style="left:100px;top:926px;" width="6" height="9" viewBox="0 0 6 9"><path d="M0.8 0.5L4.8 4.5L0.8 8.5" stroke="#b0b0b0" stroke-width="1.1" fill="none"/></svg>
<div class="t" style="left:117px;top:931px;font-size:11.3px;color:#b0b0b0;">Transform</div>
<div class="t" style="left:278px;top:931px;font-size:10.3px;color:#2d8ceb;"><span style="color:#2d8ceb">Reset</span></div>
<div class="a" style="left:543px;top:923px;width:1034px;height:16px;background:#333333;"></div>
<div class="a" style="left:543px;top:939px;width:1034px;height:1px;background:#262626;"></div>
<svg class="a" style="left:546px;top:926px;" width="8" height="12" viewBox="0 0 8 12"><path d="M0.5 0.8H7.5M0.5 11.2H7.5" stroke="#c8c8c8" stroke-width="1.3"/><rect x="3" y="0.5" width="2.2" height="11" fill="#c8c8c8"/></svg>
<div class="a" style="left:1577px;top:923px;width:1px;height:17px;background:#1a1a1a;"></div>
<div class="a" style="left:10px;top:940px;width:532px;height:16px;background:#444444;"></div>
<div class="a" style="left:10px;top:956px;width:532px;height:1px;background:#1d1d1d;"></div>
<div class="a" style="left:14px;top:941px;width:13px;height:14px;background:#2b2b2b;"></div>
<svg class="a" style="left:13px;top:943px;" width="14" height="9" viewBox="0 0 14 9"><path d="M0.5 4.5Q7 -2 13.5 4.5Q7 11 0.5 4.5Z" fill="#c0c0c0"/><circle cx="7" cy="4.5" r="2.3" fill="#2a2a2a"/></svg>
<div class="a" style="left:44px;top:941px;width:13px;height:14px;background:#333333;"></div>
<div class="a" style="left:59px;top:941px;width:13px;height:14px;background:#333333;"></div>
<svg class="a" style="left:83px;top:945px;" width="9" height="6" viewBox="0 0 9 6"><path d="M0.5 0.8L4.5 4.8L8.5 0.8" stroke="#b0b0b0" stroke-width="1.1" fill="none"/></svg>
<div class="a" style="left:95px;top:942px;width:12px;height:12px;background:#a8987a;"></div>
<div class="t" style="left:117px;top:946px;font-size:11.5px;color:#b8b8b8;">5</div>
<svg class="a" style="left:144px;top:942px;" width="16" height="13" viewBox="0 0 16 13"><rect x="0.5" y="0.5" width="15" height="12" fill="#a0a0a0" stroke="#c8c8c8"/><rect x="1" y="1" width="2" height="11" fill="#3c3c3c"/><rect x="13" y="1" width="2" height="11" fill="#3c3c3c"/><path d="M2 1.5V3M2 4.5V6M2 7.5V9M2 10.5V12M14 1.5V3M14 4.5V6M14 7.5V9M14 10.5V12" stroke="#c8c8c8" stroke-width="1"/><rect x="3" y="10.5" width="10" height="1" fill="#505050"/><path d="M8 5.2L12 4.4V8.8L9.2 9.6Z" fill="#e83232"/><path d="M4.8 9.8L7.8 6L10.8 9.8Z" fill="#17a21a"/><circle cx="6.2" cy="4.6" r="1.9" fill="#2f8ae8"/></svg>
<div class="a" style="left:161px;top:940px;width:111px;height:16px;background:#444444;border:2px solid #a0a0a0;"></div>
<div class="t" style="left:166px;top:947px;font-size:11.5px;color:#c8c8c8;">Frame 05</div>
<div class="a" style="left:277px;top:941px;width:13px;height:14px;background:#333333;"></div>
<svg class="a" style="left:277px;top:942px;" width="13" height="12" viewBox="0 0 13 12"><path d="M1.5 6A5 5 0 0 1 11.5 6Z" fill="#c0c0c0"/><rect x="0" y="8" width="13" height="1.2" fill="#c0c0c0"/><rect x="6" y="2" width="1.4" height="10" fill="#c0c0c0"/><circle cx="4.3" cy="4.6" r="1" fill="#232323"/><circle cx="8.7" cy="4.6" r="1" fill="#232323"/><rect x="2" y="10" width="9" height="1.2" fill="#c0c0c0"/></svg>
<div class="a" style="left:292px;top:941px;width:13px;height:14px;background:#333333;"></div>
<div class="a" style="left:307px;top:941px;width:13px;height:14px;background:#333333;"></div>
<svg class="a" style="left:308px;top:942px;" width="11" height="12" viewBox="0 0 11 12"><path d="M1 11L10 1" stroke="#c0c0c0" stroke-width="1.3"/></svg>
<div class="a" style="left:352px;top:941px;width:13px;height:14px;background:#333333;"></div>
<div class="a" style="left:367px;top:941px;width:13px;height:14px;background:#333333;"></div>
<div class="a" style="left:382px;top:941px;width:13px;height:14px;background:#333333;"></div>
<div class="a" style="left:433px;top:941px;width:89px;height:14px;background:#1c1c1c;"></div>
<svg class="a" style="left:414px;top:942px;" width="12" height="12" viewBox="0 0 12 12"><path d="M7.41 7.25 L7.54 7.10 L7.65 6.93 L7.75 6.74 L7.82 6.54 L7.86 6.32 L7.88 6.10 L7.87 5.86 L7.84 5.62 L7.77 5.39 L7.67 5.16 L7.54 4.93 L7.38 4.72 L7.19 4.53 L6.97 4.35 L6.73 4.20 L6.47 4.08 L6.19 3.98 L5.89 3.93 L5.59 3.90 L5.27 3.91 L4.96 3.97 L4.64 4.06 L4.33 4.19 L4.04 4.36 L3.76 4.57 L3.51 4.81 L3.28 5.09 L3.08 5.39 L2.92 5.73 L2.80 6.08 L2.72 6.46 L2.68 6.85 L2.69 7.24 L2.75 7.64 L2.85 8.03 L3.01 8.42 L3.21 8.79 L3.46 9.14 L3.75 9.46 L4.08 9.75 L4.45 10.00 L4.85 10.21 L5.28 10.37 L5.73 10.48 L6.20 10.54 L6.68 10.54 L7.16 10.49 L7.64 10.37 L8.10 10.20 L8.55 9.98 L8.98 9.70 L9.37 9.36 L9.73 8.98 L10.04 8.56 L10.30 8.09 L10.51 7.59 L10.66 7.07 L10.75 6.52 L10.77 5.96 L10.73 5.40 L10.62 4.83 L10.44 4.28 L10.20 3.75 L9.89 3.25 L9.53 2.78 L9.10 2.35 L8.62 1.97 L8.10 1.64 L7.53 1.38 L6.94 1.18" stroke="#b0b0b0" stroke-width="1.1" fill="none"/></svg>
<div class="t" style="left:440px;top:947px;font-size:11.5px;color:#c8c8c8;">None</div>
<svg class="a" style="left:508px;top:946px;" width="9" height="5" viewBox="0 0 9 5"><path d="M0.5 0.5L4.5 4.5L8.5 0.5" stroke="#b0b0b0" stroke-width="1.2" fill="none"/></svg>
<div class="a" style="left:543px;top:940px;width:1034px;height:16px;background:#4a4a4a;"></div>
<div class="a" style="left:543px;top:956px;width:1034px;height:1px;background:#1d1d1d;"></div>
<svg class="a" style="left:551px;top:940px" width="1019" height="16"><defs><clipPath id="bc940"><path d="M0 7A6 6 0 0 1 6 1H1013A6 6 0 0 1 1019 7V16H0Z"/></clipPath></defs><rect width="1019" height="1" fill="#d6cab0"/><rect y="1" width="8" height="7" fill="#0e0e0e"/><rect x="1011" y="1" width="8" height="7" fill="#0e0e0e"/><g clip-path="url(#bc940)"><rect width="1019" height="16" fill="#a59778"/><rect width="1019" height="16" fill="#000" filter="url(#nz)" opacity="0.13"/></g><rect y="15" width="1019" height="1" fill="#8a7d62"/></svg>
<div class="a" style="left:1577px;top:940px;width:1px;height:17px;background:#1a1a1a;"></div>
<div class="a" style="left:10px;top:957px;width:532px;height:16px;background:#262626;"></div>
<div class="a" style="left:10px;top:973px;width:532px;height:1px;background:#1d1d1d;"></div>
<svg class="a" style="left:100px;top:960px;" width="6" height="9" viewBox="0 0 6 9"><path d="M0.8 0.5L4.8 4.5L0.8 8.5" stroke="#b0b0b0" stroke-width="1.1" fill="none"/></svg>
<div class="t" style="left:117px;top:965px;font-size:11.3px;color:#b0b0b0;">Transform</div>
<div class="t" style="left:278px;top:965px;font-size:10.3px;color:#2d8ceb;"><span style="color:#2d8ceb">Reset</span></div>
<div class="a" style="left:543px;top:957px;width:1034px;height:16px;background:#333333;"></div>
<div class="a" style="left:543px;top:973px;width:1034px;height:1px;background:#262626;"></div>
<svg class="a" style="left:546px;top:960px;" width="8" height="12" viewBox="0 0 8 12"><path d="M0.5 0.8H7.5M0.5 11.2H7.5" stroke="#c8c8c8" stroke-width="1.3"/><rect x="3" y="0.5" width="2.2" height="11" fill="#c8c8c8"/></svg>
<div class="a" style="left:1577px;top:957px;width:1px;height:17px;background:#1a1a1a;"></div>
<div class="a" style="left:10px;top:974px;width:532px;height:16px;background:#444444;"></div>
<div class="a" style="left:10px;top:990px;width:532px;height:1px;background:#1d1d1d;"></div>
<div class="a" style="left:14px;top:975px;width:13px;height:14px;background:#2b2b2b;"></div>
<svg class="a" style="left:13px;top:977px;" width="14" height="9" viewBox="0 0 14 9"><path d="M0.5 4.5Q7 -2 13.5 4.5Q7 11 0.5 4.5Z" fill="#c0c0c0"/><circle cx="7" cy="4.5" r="2.3" fill="#2a2a2a"/></svg>
<div class="a" style="left:44px;top:975px;width:13px;height:14px;background:#333333;"></div>
<div class="a" style="left:59px;top:975px;width:13px;height:14px;background:#333333;"></div>
<svg class="a" style="left:83px;top:979px;" width="9" height="6" viewBox="0 0 9 6"><path d="M0.5 0.8L4.5 4.8L8.5 0.8" stroke="#b0b0b0" stroke-width="1.1" fill="none"/></svg>
<div class="a" style="left:95px;top:976px;width:12px;height:12px;background:#a8987a;"></div>
<div class="t" style="left:117px;top:980px;font-size:11.5px;color:#b8b8b8;">6</div>
<svg class="a" style="left:144px;top:976px;" width="16" height="13" viewBox="0 0 16 13"><rect x="0.5" y="0.5" width="15" height="12" fill="#a0a0a0" stroke="#c8c8c8"/><rect x="1" y="1" width="2" height="11" fill="#3c3c3c"/><rect x="13" y="1" width="2" height="11" fill="#3c3c3c"/><path d="M2 1.5V3M2 4.5V6M2 7.5V9M2 10.5V12M14 1.5V3M14 4.5V6M14 7.5V9M14 10.5V12" stroke="#c8c8c8" stroke-width="1"/><rect x="3" y="10.5" width="10" height="1" fill="#505050"/><path d="M8 5.2L12 4.4V8.8L9.2 9.6Z" fill="#e83232"/><path d="M4.8 9.8L7.8 6L10.8 9.8Z" fill="#17a21a"/><circle cx="6.2" cy="4.6" r="1.9" fill="#2f8ae8"/></svg>
<div class="a" style="left:161px;top:974px;width:111px;height:16px;background:#444444;border:2px solid #a0a0a0;"></div>
<div class="t" style="left:166px;top:981px;font-size:11.5px;color:#c8c8c8;">Frame 06</div>
<div class="a" style="left:277px;top:975px;width:13px;height:14px;background:#333333;"></div>
<svg class="a" style="left:277px;top:976px;" width="13" height="12" viewBox="0 0 13 12"><path d="M1.5 6A5 5 0 0 1 11.5 6Z" fill="#c0c0c0"/><rect x="0" y="8" width="13" height="1.2" fill="#c0c0c0"/><rect x="6" y="2" width="1.4" height="10" fill="#c0c0c0"/><circle cx="4.3" cy="4.6" r="1" fill="#232323"/><circle cx="8.7" cy="4.6" r="1" fill="#232323"/><rect x="2" y="10" width="9" height="1.2" fill="#c0c0c0"/></svg>
<div class="a" style="left:292px;top:975px;width:13px;height:14px;background:#333333;"></div>
<div class="a" style="left:307px;top:975px;width:13px;height:14px;background:#333333;"></div>
<svg class="a" style="left:308px;top:976px;" width="11" height="12" viewBox="0 0 11 12"><path d="M1 11L10 1" stroke="#c0c0c0" stroke-width="1.3"/></svg>
<div class="a" style="left:352px;top:975px;width:13px;height:14px;background:#333333;"></div>
<div class="a" style="left:367px;top:975px;width:13px;height:14px;background:#333333;"></div>
<div class="a" style="left:382px;top:975px;width:13px;height:14px;background:#333333;"></div>
<div class="a" style="left:433px;top:975px;width:89px;height:14px;background:#1c1c1c;"></div>
<svg class="a" style="left:414px;top:976px;" width="12" height="12" viewBox="0 0 12 12"><path d="M7.41 7.25 L7.54 7.10 L7.65 6.93 L7.75 6.74 L7.82 6.54 L7.86 6.32 L7.88 6.10 L7.87 5.86 L7.84 5.62 L7.77 5.39 L7.67 5.16 L7.54 4.93 L7.38 4.72 L7.19 4.53 L6.97 4.35 L6.73 4.20 L6.47 4.08 L6.19 3.98 L5.89 3.93 L5.59 3.90 L5.27 3.91 L4.96 3.97 L4.64 4.06 L4.33 4.19 L4.04 4.36 L3.76 4.57 L3.51 4.81 L3.28 5.09 L3.08 5.39 L2.92 5.73 L2.80 6.08 L2.72 6.46 L2.68 6.85 L2.69 7.24 L2.75 7.64 L2.85 8.03 L3.01 8.42 L3.21 8.79 L3.46 9.14 L3.75 9.46 L4.08 9.75 L4.45 10.00 L4.85 10.21 L5.28 10.37 L5.73 10.48 L6.20 10.54 L6.68 10.54 L7.16 10.49 L7.64 10.37 L8.10 10.20 L8.55 9.98 L8.98 9.70 L9.37 9.36 L9.73 8.98 L10.04 8.56 L10.30 8.09 L10.51 7.59 L10.66 7.07 L10.75 6.52 L10.77 5.96 L10.73 5.40 L10.62 4.83 L10.44 4.28 L10.20 3.75 L9.89 3.25 L9.53 2.78 L9.10 2.35 L8.62 1.97 L8.10 1.64 L7.53 1.38 L6.94 1.18" stroke="#b0b0b0" stroke-width="1.1" fill="none"/></svg>
<div class="t" style="left:440px;top:981px;font-size:11.5px;color:#c8c8c8;">None</div>
<svg class="a" style="left:508px;top:980px;" width="9" height="5" viewBox="0 0 9 5"><path d="M0.5 0.5L4.5 4.5L8.5 0.5" stroke="#b0b0b0" stroke-width="1.2" fill="none"/></svg>
<div class="a" style="left:543px;top:974px;width:1034px;height:16px;background:#4a4a4a;"></div>
<div class="a" style="left:543px;top:990px;width:1034px;height:1px;background:#1d1d1d;"></div>
<svg class="a" style="left:551px;top:974px" width="1019" height="16"><defs><clipPath id="bc974"><path d="M0 7A6 6 0 0 1 6 1H1013A6 6 0 0 1 1019 7V16H0Z"/></clipPath></defs><rect width="1019" height="1" fill="#d6cab0"/><rect y="1" width="8" height="7" fill="#0e0e0e"/><rect x="1011" y="1" width="8" height="7" fill="#0e0e0e"/><g clip-path="url(#bc974)"><rect width="1019" height="16" fill="#a59778"/><rect width="1019" height="16" fill="#000" filter="url(#nz)" opacity="0.13"/></g><rect y="15" width="1019" height="1" fill="#8a7d62"/></svg>
<div class="a" style="left:1577px;top:974px;width:1px;height:17px;background:#1a1a1a;"></div>
<div class="a" style="left:10px;top:991px;width:532px;height:16px;background:#262626;"></div>
<div class="a" style="left:10px;top:1007px;width:532px;height:1px;background:#1d1d1d;"></div>
<svg class="a" style="left:100px;top:994px;" width="6" height="9" viewBox="0 0 6 9"><path d="M0.8 0.5L4.8 4.5L0.8 8.5" stroke="#b0b0b0" stroke-width="1.1" fill="none"/></svg>
<div class="t" style="left:117px;top:999px;font-size:11.3px;color:#b0b0b0;">Transform</div>
<div class="t" style="left:278px;top:999px;font-size:10.3px;color:#2d8ceb;"><span style="color:#2d8ceb">Reset</span></div>
<div class="a" style="left:543px;top:991px;width:1034px;height:16px;background:#333333;"></div>
<div class="a" style="left:543px;top:1007px;width:1034px;height:1px;background:#262626;"></div>
<svg class="a" style="left:546px;top:994px;" width="8" height="12" viewBox="0 0 8 12"><path d="M0.5 0.8H7.5M0.5 11.2H7.5" stroke="#c8c8c8" stroke-width="1.3"/><rect x="3" y="0.5" width="2.2" height="11" fill="#c8c8c8"/></svg>
<div class="a" style="left:1577px;top:991px;width:1px;height:17px;background:#1a1a1a;"></div>
<div class="a" style="left:143px;top:787px;width:128px;height:16px;background:#4a4a4a;"></div>
<svg class="a" style="left:130px;top:788px;" width="13" height="14" viewBox="0 0 13 14"><circle cx="6.5" cy="8" r="5.2" fill="none" stroke="#b8b8b8" stroke-width="1.2"/><path d="M4.8 1.2H8.2M6.5 1.2V2.8" stroke="#b8b8b8" stroke-width="1.2"/><path d="M1 3.6L2.4 4.8" stroke="#b8b8b8" stroke-width="1.2"/></svg>
<div class="t" style="left:150px;top:795px;font-size:11.3px;color:#c8c8c8;">Scale</div>
<svg class="a" style="left:276px;top:791px;" width="14" height="8" viewBox="0 0 14 8"><path d="M5 1H3.5a3 3 0 0 0 0 6H5M9 1H10.5a3 3 0 0 1 0 6H9M4.5 4H9.5" stroke="#c0c0c0" stroke-width="1.3" fill="none"/></svg>
<div class="t" style="left:295px;top:795px;font-size:10.3px;color:#2d8ceb;">45,0 ,45,0 <span style="color:#a5a5a5">%</span></div>
<div class="a" style="left:124px;top:782px;width:239px;height:27px;border:3px solid #c6e02a;"></div>
<div class="a" style="left:542px;top:665px;width:1px;height:354px;background:#0f0f0f;"></div>
<div class="a" style="left:543px;top:668px;width:1034px;height:2px;background:#161616;"></div>
<div class="a" style="left:550px;top:670px;width:1020px;height:8px;background:#6b6b6b;"></div>
<div class="a" style="left:544px;top:670px;width:7px;height:8px;background:#2d8ceb;border-radius:4px 0 0 4px;"></div>
<div class="a" style="left:1570px;top:670px;width:6px;height:8px;background:#2d8ceb;border-radius:0 4px 4px 0;"></div>
<div class="a" style="left:543px;top:678px;width:1034px;height:1px;background:#111;"></div>
<div class="a" style="left:550px;top:694px;width:1px;height:4px;background:#9a9a9a;"></div>
<div class="t" style="left:551px;top:686px;font-size:10.5px;color:#c0c0c0;">0f</div>
<div class="a" style="left:607px;top:694px;width:1px;height:4px;background:#9a9a9a;"></div>
<div class="t" style="left:567.3px;width:80px;text-align:center;top:686px;font-size:10.5px;color:#c0c0c0;">10f</div>
<div class="a" style="left:665px;top:694px;width:1px;height:4px;background:#9a9a9a;"></div>
<div class="t" style="left:624.7px;width:80px;text-align:center;top:686px;font-size:10.5px;color:#c0c0c0;">20f</div>
<div class="a" style="left:722px;top:693px;width:1px;height:5px;background:#9a9a9a;"></div>
<div class="t" style="left:682.0px;width:80px;text-align:center;top:686px;font-size:10.5px;color:#c0c0c0;">01:00f</div>
<div class="a" style="left:779px;top:694px;width:1px;height:4px;background:#9a9a9a;"></div>
<div class="t" style="left:739.3px;width:80px;text-align:center;top:686px;font-size:10.5px;color:#c0c0c0;">10f</div>
<div class="a" style="left:837px;top:694px;width:1px;height:4px;background:#9a9a9a;"></div>
<div class="t" style="left:796.6px;width:80px;text-align:center;top:686px;font-size:10.5px;color:#c0c0c0;">20f</div>
<div class="a" style="left:894px;top:693px;width:1px;height:5px;background:#9a9a9a;"></div>
<div class="t" style="left:854.0px;width:80px;text-align:center;top:686px;font-size:10.5px;color:#c0c0c0;">02:00f</div>
<div class="a" style="left:951px;top:694px;width:1px;height:4px;background:#9a9a9a;"></div>
<div class="t" style="left:911.3px;width:80px;text-align:center;top:686px;font-size:10.5px;color:#c0c0c0;">10f</div>
<div class="a" style="left:1009px;top:694px;width:1px;height:4px;background:#9a9a9a;"></div>
<div class="t" style="left:968.6px;width:80px;text-align:center;top:686px;font-size:10.5px;color:#c0c0c0;">20f</div>
<div class="a" style="left:1066px;top:693px;width:1px;height:5px;background:#9a9a9a;"></div>
<div class="t" style="left:1026.0px;width:80px;text-align:center;top:686px;font-size:10.5px;color:#c0c0c0;">03:00f</div>
<div class="a" style="left:1123px;top:694px;width:1px;height:4px;background:#9a9a9a;"></div>
<div class="t" style="left:1083.3px;width:80px;text-align:center;top:686px;font-size:10.5px;color:#c0c0c0;">10f</div>
<div class="a" style="left:1181px;top:694px;width:1px;height:4px;background:#9a9a9a;"></div>
<div class="t" style="left:1140.6px;width:80px;text-align:center;top:686px;font-size:10.5px;color:#c0c0c0;">20f</div>
<div class="a" style="left:1238px;top:693px;width:1px;height:5px;background:#9a9a9a;"></div>
<div class="t" style="left:1198.0px;width:80px;text-align:center;top:686px;font-size:10.5px;color:#c0c0c0;">04:00f</div>
<div class="a" style="left:1295px;top:694px;width:1px;height:4px;background:#9a9a9a;"></div>
<div class="t" style="left:1255.3px;width:80px;text-align:center;top:686px;font-size:10.5px;color:#c0c0c0;">10f</div>
<div class="a" style="left:1353px;top:694px;width:1px;height:4px;background:#9a9a9a;"></div>
<div class="t" style="left:1312.6px;width:80px;text-align:center;top:686px;font-size:10.5px;color:#c0c0c0;">20f</div>
<div class="a" style="left:1410px;top:693px;width:1px;height:5px;background:#9a9a9a;"></div>
<div class="t" style="left:1369.9px;width:80px;text-align:center;top:686px;font-size:10.5px;color:#c0c0c0;">05:00f</div>
<div class="a" style="left:1467px;top:694px;width:1px;height:4px;background:#9a9a9a;"></div>
<div class="t" style="left:1427.3px;width:80px;text-align:center;top:686px;font-size:10.5px;color:#c0c0c0;">10f</div>
<div class="a" style="left:1525px;top:694px;width:1px;height:4px;background:#9a9a9a;"></div>
<div class="t" style="left:1484.6px;width:80px;text-align:center;top:686px;font-size:10.5px;color:#c0c0c0;">20f</div>
<div class="a" style="left:1582px;top:694px;width:1px;height:4px;background:#9a9a9a;"></div>
<div class="t" style="left:1564px;top:686px;font-size:10.5px;color:#c0c0c0;">06</div>
<div class="a" style="left:543px;top:698px;width:1034px;height:1px;background:#111;"></div>
<div class="a" style="left:550px;top:699px;width:1020px;height:15px;background:#666666;"></div>
<div class="a" style="left:544px;top:699px;width:7px;height:15px;background:#2d8ceb;border-radius:5px 0 0 5px;"></div>
<div class="a" style="left:1570px;top:699px;width:6px;height:15px;background:#2d8ceb;border-radius:0 5px 5px 0;"></div>
<div class="a" style="left:543px;top:714px;width:1034px;height:1px;background:#111;"></div>
<div class="a" style="left:551px;top:715px;width:1019px;height:3px;background:#15c020;"></div>
<div class="a" style="left:543px;top:718px;width:1034px;height:1px;background:#1a1a1a;"></div>
<svg class="a" style="left:543px;top:679px;" width="15" height="15" viewBox="0 0 15 15"><path d="M0.5 0.5H14L7.25 13.5Z" fill="#2d8ceb"/></svg>
<div class="a" style="left:550px;top:679px;width:1px;height:327px;background:#2d8ceb;"></div>
<div class="a" style="left:1577px;top:665px;width:17px;height:341px;background:#222222;"></div>
<svg class="a" style="left:1580px;top:700px;" width="12" height="15" viewBox="0 0 12 15"><path d="M0 0H12V9L6 14L0 9Z" fill="#c8c8c8"/></svg>
<svg class="a" style="left:1579px;top:721px;" width="14" height="12" viewBox="0 0 14 12"><path d="M1 6L6 1V4H13V9H6V11Z" fill="none" stroke="#c8c8c8" stroke-width="1.3"/><circle cx="5" cy="9" r="2" fill="#222" stroke="#c8c8c8" stroke-width="1.2"/></svg>
<div class="a" style="left:1579px;top:742px;width:13px;height:260px;background:#333333;border-radius:6px;"></div>
<div class="a" style="left:10px;top:1005px;width:1584px;height:16px;background:#232323;"></div>
<div class="a" style="left:13px;top:1006px;width:17px;height:15px;background:#161616;border:1px solid #2a2a2a;"></div>
<svg class="a" style="left:16px;top:1008px;" width="12" height="12" viewBox="0 0 12 12"><rect x="0.7" y="0.7" width="7" height="7" fill="none" stroke="#2d8ceb" stroke-width="1.2"/><rect x="4" y="4" width="7.3" height="7.3" fill="#161616" stroke="#2d8ceb" stroke-width="1.2"/><rect x="6.5" y="6.5" width="2.5" height="2.5" fill="#2d8ceb"/></svg>
<svg class="a" style="left:35px;top:1008px;" width="12" height="12" viewBox="0 0 12 12"><circle cx="4.5" cy="4.5" r="3.8" fill="none" stroke="#b0b0b0" stroke-width="1.2"/><rect x="5" y="5" width="6.3" height="6.3" fill="#232323" stroke="#b0b0b0" stroke-width="1.2"/></svg>
<svg class="a" style="left:54px;top:1008px;" width="12" height="12" viewBox="0 0 12 12"><path d="M3 0H9V3L11 6L9 9V12H3V9L1 6L3 3Z" fill="#a5a5a5"/></svg>
<svg class="a" style="left:73px;top:1008px;" width="14" height="12" viewBox="0 0 14 12"><circle cx="5" cy="5" r="4.5" fill="#b0b0b0"/><rect x="1" y="9" width="12" height="2" fill="#b0b0b0"/><path d="M10 3L12 8M12 3L13 8" stroke="#b0b0b0"/></svg>
<div class="t" style="left:115px;top:1013px;font-size:11px;color:#b0b0b0;">Frame Render Time:</div>
<div class="t" style="left:221px;top:1013px;font-size:11px;color:#3ec9a0;">9ms</div>
<div class="a" style="left:274px;top:1006px;width:134px;height:15px;background:#1c1c1c;border:1px solid #2a2a2a;"></div>
<div class="t" style="left:280px;top:1013px;font-size:11px;color:#b0b0b0;">Toggle Switches / Modes</div>
<div class="a" style="left:543px;top:1005px;width:107px;height:1px;background:#111;"></div>
<svg class="a" style="left:548px;top:1010px;" width="10" height="5" viewBox="0 0 10 5"><path d="M0 5L5 0L10 5Z" fill="#c0c0c0"/></svg>
<div class="a" style="left:574px;top:1012px;width:44px;height:2px;background:#3a3a3a;"></div>
<div class="a" style="left:568px;top:1008px;width:11px;height:11px;border-radius:50%;border:2px solid #a8a8a8;background:#232323"></div>
<svg class="a" style="left:628px;top:1009px;" width="17" height="7" viewBox="0 0 17 7"><path d="M0 7L4 3L5 4L8 0L17 7Z" fill="#c0c0c0"/></svg>
<div class="a" style="left:1595px;top:78px;width:4px;height:944px;background:#1a1a1a;"></div>
<div class="a" style="left:1599px;top:78px;width:312px;height:55px;background:#232323;"></div>
<div class="t" style="left:1612px;top:91px;font-size:11.5px;color:#c8c8c8;">Preview</div>
<svg class="a" style="left:1663px;top:87px;" width="11" height="10" viewBox="0 0 11 10"><path d="M0.5 1.5H9.5M0.5 5H9.5M0.5 8.5H9.5" stroke="#c8c8c8" stroke-width="1"/></svg>
<svg class="a" style="left:1645px;top:113px;" width="12" height="12" viewBox="0 0 12 12"><rect x="0" y="1" width="2" height="10" fill="#b0b0b0"/><path d="M11 1V11L3 6Z" fill="#b0b0b0"/></svg>
<svg class="a" style="left:1669px;top:113px;" width="13" height="12" viewBox="0 0 13 12"><path d="M8 1V11L0 6Z" fill="#b0b0b0"/><rect x="10" y="1" width="2" height="10" fill="#b0b0b0"/></svg>
<svg class="a" style="left:1694px;top:113px;" width="10" height="12" viewBox="0 0 10 12"><path d="M0 1V11L9 6Z" fill="#b0b0b0"/></svg>
<svg class="a" style="left:1717px;top:113px;" width="13" height="12" viewBox="0 0 13 12"><rect x="0" y="1" width="2" height="10" fill="#b0b0b0"/><path d="M4 1V11L12 6Z" fill="#b0b0b0"/></svg>
<svg class="a" style="left:1741px;top:113px;" width="13" height="12" viewBox="0 0 13 12"><path d="M0 1V11L9 6Z" fill="#b0b0b0"/><rect x="10" y="1" width="2" height="10" fill="#b0b0b0"/></svg>
<div class="a" style="left:1599px;top:133px;width:312px;height:5px;background:#1a1a1a;"></div>
<div class="a" style="left:1599px;top:138px;width:300px;height:884px;background:#232323;"></div>
<div class="a" style="left:1899px;top:138px;width:12px;height:884px;background:#202020;"></div>
<div class="a" style="left:1900px;top:140px;width:10px;height:601px;background:#333333;border-radius:5px;"></div>
<div class="t" style="left:1612px;top:151px;font-size:11px;color:#c8c8c8;">Properties: 6 layers selected</div>
<svg class="a" style="left:1879px;top:147px;" width="11" height="10" viewBox="0 0 11 10"><path d="M0.5 1.5H9.5M0.5 5H9.5M0.5 8.5H9.5" stroke="#c8c8c8" stroke-width="1"/></svg>
<div class="t" style="left:1611px;top:175px;font-size:11px;color:#a8a8a8;">Layer Transform</div>
<div class="t" style="left:1752px;top:175px;font-size:11px;color:#2d8ceb;">Reset</div>
<svg class="a" style="left:1621px;top:188px;" width="13" height="14" viewBox="0 0 13 14"><circle cx="6.5" cy="8" r="5.2" fill="none" stroke="#b8b8b8" stroke-width="1.2"/><path d="M4.8 1.2H8.2M6.5 1.2V2.8" stroke="#b8b8b8" stroke-width="1.2"/><path d="M1 3.6L2.4 4.8" stroke="#b8b8b8" stroke-width="1.2"/></svg>
<div class="t" style="left:1659px;top:195px;font-size:11px;color:#a8a8a8;">Anchor Point</div>
<div class="t" style="left:1751px;top:195px;font-size:11px;color:#2d8ceb;">540</div>
<div class="a" style="left:1749px;top:204px;width:39px;height:1px;background:#3c3c3c;"></div>
<div class="t" style="left:1801px;top:195px;font-size:11px;color:#2d8ceb;">960</div>
<div class="a" style="left:1799px;top:204px;width:39px;height:1px;background:#3c3c3c;"></div>
<svg class="a" style="left:1621px;top:208px;" width="13" height="14" viewBox="0 0 13 14"><circle cx="6.5" cy="8" r="5.2" fill="none" stroke="#b8b8b8" stroke-width="1.2"/><path d="M4.8 1.2H8.2M6.5 1.2V2.8" stroke="#b8b8b8" stroke-width="1.2"/><path d="M1 3.6L2.4 4.8" stroke="#b8b8b8" stroke-width="1.2"/></svg>
<div class="t" style="left:1659px;top:215px;font-size:11px;color:#a8a8a8;">Position</div>
<div class="t" style="left:1751px;top:215px;font-size:11px;color:#2d8ceb;">1500</div>
<div class="a" style="left:1749px;top:224px;width:39px;height:1px;background:#3c3c3c;"></div>
<div class="t" style="left:1801px;top:215px;font-size:11px;color:#2d8ceb;">540</div>
<div class="a" style="left:1799px;top:224px;width:39px;height:1px;background:#3c3c3c;"></div>
<svg class="a" style="left:1621px;top:228px;" width="13" height="14" viewBox="0 0 13 14"><circle cx="6.5" cy="8" r="5.2" fill="none" stroke="#b8b8b8" stroke-width="1.2"/><path d="M4.8 1.2H8.2M6.5 1.2V2.8" stroke="#b8b8b8" stroke-width="1.2"/><path d="M1 3.6L2.4 4.8" stroke="#b8b8b8" stroke-width="1.2"/></svg>
<div class="t" style="left:1659px;top:235px;font-size:11px;color:#a8a8a8;">Scale</div>
<div class="t" style="left:1751px;top:235px;font-size:11px;color:#2d8ceb;">45 <span style="color:#a5a5a5;font-size:10px">%</span></div>
<div class="a" style="left:1749px;top:244px;width:39px;height:1px;background:#3c3c3c;"></div>
<div class="t" style="left:1801px;top:235px;font-size:11px;color:#2d8ceb;">45 <span style="color:#a5a5a5;font-size:10px">%</span></div>
<div class="a" style="left:1799px;top:244px;width:39px;height:1px;background:#3c3c3c;"></div>
<svg class="a" style="left:1621px;top:248px;" width="13" height="14" viewBox="0 0 13 14"><circle cx="6.5" cy="8" r="5.2" fill="none" stroke="#b8b8b8" stroke-width="1.2"/><path d="M4.8 1.2H8.2M6.5 1.2V2.8" stroke="#b8b8b8" stroke-width="1.2"/><path d="M1 3.6L2.4 4.8" stroke="#b8b8b8" stroke-width="1.2"/></svg>
<div class="t" style="left:1659px;top:255px;font-size:11px;color:#a8a8a8;">Rotation</div>
<div class="t" style="left:1751px;top:255px;font-size:11px;color:#2d8ceb;">0 <span style="color:#a5a5a5;font-size:10px">x</span>+0 <span style="color:#a5a5a5;font-size:9px">°</span></div>
<div class="a" style="left:1749px;top:264px;width:39px;height:1px;background:#3c3c3c;"></div>
<svg class="a" style="left:1621px;top:268px;" width="13" height="14" viewBox="0 0 13 14"><circle cx="6.5" cy="8" r="5.2" fill="none" stroke="#b8b8b8" stroke-width="1.2"/><path d="M4.8 1.2H8.2M6.5 1.2V2.8" stroke="#b8b8b8" stroke-width="1.2"/><path d="M1 3.6L2.4 4.8" stroke="#b8b8b8" stroke-width="1.2"/></svg>
<div class="t" style="left:1659px;top:275px;font-size:11px;color:#a8a8a8;">Opacity</div>
<div class="t" style="left:1751px;top:275px;font-size:11px;color:#2d8ceb;">100 <span style="color:#a5a5a5;font-size:10px">%</span></div>
<div class="a" style="left:1749px;top:284px;width:39px;height:1px;background:#3c3c3c;"></div>
<svg class="a" style="left:1726px;top:232px;" width="15" height="8" viewBox="0 0 15 8"><path d="M5 1H3.5a3 3 0 0 0 0 6H5M10 1H11.5a3 3 0 0 1 0 6H10M4.5 4H10.5" stroke="#2d8ceb" stroke-width="1.6" fill="none"/></svg>
<div class="a" style="left:1600px;top:300px;width:299px;height:2px;background:#1c1c1c;"></div>
<div class="t" style="left:1612px;top:316px;font-size:11.5px;color:#c8c8c8;">Align</div>
<svg class="a" style="left:1879px;top:313px;" width="11" height="10" viewBox="0 0 11 10"><path d="M0.5 1.5H9.5M0.5 5H9.5M0.5 8.5H9.5" stroke="#c8c8c8" stroke-width="1"/></svg>
<div class="t" style="left:1606px;top:342px;font-size:11px;color:#a0a0a0;">Align Layers to:</div>
<div class="a" style="left:1693px;top:334px;width:110px;height:18px;background:#1b1b1b;border-radius:3px;border:1px solid #2e2e2e;"></div>
<div class="t" style="left:1700px;top:342px;font-size:11px;color:#c0c0c0;">Selection</div>
<svg class="a" style="left:1788px;top:341px;" width="9" height="5" viewBox="0 0 9 5"><path d="M0.5 0.5L4.5 4.5L8.5 0.5" stroke="#b0b0b0" stroke-width="1.2" fill="none"/></svg>
<svg class="a" style="left:1610px;top:358px;" width="16" height="18" viewBox="0 0 16 18"><rect x="0" y="0" width="1.3" height="18" fill="#b0b0b0"/><rect x="3" y="3" width="7" height="5" fill="#b0b0b0"/><rect x="3" y="10" width="12" height="5" fill="#b0b0b0"/></svg>
<svg class="a" style="left:1645px;top:358px;" width="14" height="18" viewBox="0 0 14 18"><rect x="6.3" y="0" width="1.3" height="18" fill="#b0b0b0"/><rect x="3" y="3" width="8" height="5" fill="#b0b0b0"/><rect x="0" y="10" width="14" height="5" fill="#b0b0b0"/></svg>
<svg class="a" style="left:1679px;top:358px;" width="16" height="18" viewBox="0 0 16 18"><rect x="14.7" y="0" width="1.3" height="18" fill="#b0b0b0"/><rect x="6" y="3" width="7" height="5" fill="#b0b0b0"/><rect x="1" y="10" width="12" height="5" fill="#b0b0b0"/></svg>
<svg class="a" style="left:1712px;top:358px;" width="18" height="16" viewBox="0 0 18 16"><rect x="0" y="0" width="18" height="1.3" fill="#b0b0b0"/><rect x="3" y="3" width="5" height="12" fill="#b0b0b0"/><rect x="10" y="3" width="5" height="7" fill="#b0b0b0"/></svg>
<svg class="a" style="left:1746px;top:359px;" width="18" height="14" viewBox="0 0 18 14"><rect x="0" y="6.3" width="18" height="1.3" fill="#b0b0b0"/><rect x="3" y="0" width="5" height="14" fill="#b0b0b0"/><rect x="10" y="3" width="5" height="8" fill="#b0b0b0"/></svg>
<svg class="a" style="left:1780px;top:359px;" width="18" height="16" viewBox="0 0 18 16"><rect x="0" y="14.7" width="18" height="1.3" fill="#b0b0b0"/><rect x="3" y="1" width="5" height="12" fill="#b0b0b0"/><rect x="10" y="6" width="5" height="7" fill="#b0b0b0"/></svg>
<div class="a" style="left:1605px;top:381px;width:195px;height:2px;background:#2e2e2e;"></div>
<div class="t" style="left:1606px;top:390px;font-size:11px;color:#a0a0a0;">Distribute Layers:</div>
<svg class="a" style="left:1610px;top:402px;" width="18" height="16" viewBox="0 0 18 16"><rect x="0" y="0" width="18" height="1.3" fill="#b0b0b0"/><rect x="3" y="3" width="12" height="4" fill="#b0b0b0"/><rect x="3" y="9" width="12" height="4" fill="#b0b0b0"/><rect x="0" y="14.7" width="18" height="1.3" fill="#b0b0b0"/></svg>
<svg class="a" style="left:1644px;top:402px;" width="18" height="16" viewBox="0 0 18 16"><rect x="0" y="3.5" width="18" height="1.3" fill="#b0b0b0"/><rect x="3" y="2" width="12" height="4" fill="#b0b0b0"/><rect x="3" y="10" width="12" height="4" fill="#b0b0b0"/><rect x="0" y="11.5" width="18" height="1.3" fill="#b0b0b0"/></svg>
<svg class="a" style="left:1678px;top:402px;" width="18" height="16" viewBox="0 0 18 16"><rect x="3" y="2" width="12" height="4" fill="#b0b0b0"/><rect x="0" y="7" width="18" height="1.3" fill="#b0b0b0"/><rect x="3" y="10" width="12" height="4" fill="#b0b0b0"/><rect x="0" y="14.7" width="18" height="1.3" fill="#b0b0b0"/></svg>
<svg class="a" style="left:1712px;top:401px;" width="18" height="18" viewBox="0 0 18 18"><rect x="0" y="0" width="1.3" height="18" fill="#b0b0b0"/><rect x="3" y="3" width="4" height="12" fill="#b0b0b0"/><rect x="9" y="5" width="4" height="8" fill="#b0b0b0"/><rect x="14.7" y="0" width="1.3" height="18" fill="#b0b0b0"/></svg>
<svg class="a" style="left:1746px;top:401px;" width="18" height="18" viewBox="0 0 18 18"><rect x="3" y="3" width="4" height="12" fill="#b0b0b0"/><rect x="4.3" y="0" width="1.3" height="18" fill="#b0b0b0"/><rect x="10" y="5" width="4" height="8" fill="#b0b0b0"/><rect x="11.3" y="0" width="1.3" height="18" fill="#b0b0b0"/></svg>
<svg class="a" style="left:1780px;top:401px;" width="18" height="18" viewBox="0 0 18 18"><rect x="1" y="3" width="4" height="12" fill="#b0b0b0"/><rect x="7" y="5" width="4" height="8" fill="#b0b0b0"/><rect x="12" y="0" width="1.3" height="18" fill="#b0b0b0"/><rect x="16" y="0" width="1.3" height="18" fill="#b0b0b0"/></svg>
<div class="a" style="left:1600px;top:429px;width:299px;height:2px;background:#1c1c1c;"></div>
<div class="t" style="left:1612px;top:445px;font-size:11.5px;color:#a8a8a8;">Audio</div>
<div class="a" style="left:1600px;top:459px;width:299px;height:2px;background:#1c1c1c;"></div>
<div class="t" style="left:1612px;top:475px;font-size:11.5px;color:#c8c8c8;">Effects &amp; Presets</div>
<svg class="a" style="left:1879px;top:472px;" width="11" height="10" viewBox="0 0 11 10"><path d="M0.5 1.5H9.5M0.5 5H9.5M0.5 8.5H9.5" stroke="#c8c8c8" stroke-width="1"/></svg>
<div class="a" style="left:1605px;top:492px;width:289px;height:19px;background:#161616;border-radius:3px;border:1px solid #2c2c2c;"></div>
<svg class="a" style="left:1611px;top:496px;" width="16" height="12" viewBox="0 0 16 12"><circle cx="7" cy="4.5" r="3.5" fill="none" stroke="#a5a5a5" stroke-width="1.2"/><path d="M4.5 7L1 10.5" stroke="#a5a5a5" stroke-width="1.3"/><path d="M10.5 7.5H15.5L13 10Z" fill="#a5a5a5"/></svg>
<div class="a" style="left:1600px;top:515px;width:299px;height:2px;background:#111;"></div>
<div class="a" style="left:1899px;top:516px;width:1px;height:19px;background:#111;"></div>
<svg class="a" style="left:1879px;top:518px;" width="12" height="13" viewBox="0 0 12 13"><path d="M0 0H12V13H5L0 8Z" fill="#c8c8c8"/><path d="M0 8H5V13" fill="#232323"/></svg>
<div class="a" style="left:1600px;top:535px;width:299px;height:2px;background:#1c1c1c;"></div>
<div class="t" style="left:1612px;top:550px;font-size:11.5px;color:#c8c8c8;">Paragraph</div>
<svg class="a" style="left:1879px;top:547px;" width="11" height="10" viewBox="0 0 11 10"><path d="M0.5 1.5H9.5M0.5 5H9.5M0.5 8.5H9.5" stroke="#c8c8c8" stroke-width="1"/></svg>
<div class="a" style="left:1606px;top:570px;width:21px;height:22px;background:#161616;border-radius:3px;border:1px solid #2a2a2a;"></div>
<svg class="a" style="left:1609px;top:573px;" width="16" height="14" viewBox="0 0 16 14"><rect x="0" y="0" width="12" height="1" fill="#2d8ceb"/><rect x="0" y="3" width="15" height="1" fill="#2d8ceb"/><rect x="0" y="6" width="12" height="1" fill="#2d8ceb"/><rect x="0" y="9" width="15" height="1" fill="#2d8ceb"/><rect x="0" y="12" width="12" height="1" fill="#2d8ceb"/></svg>
<svg class="a" style="left:1633px;top:573px;" width="16" height="14" viewBox="0 0 16 14"><rect x="2" y="0" width="12" height="1" fill="#b8b8b8"/><rect x="0" y="3" width="16" height="1" fill="#b8b8b8"/><rect x="2" y="6" width="12" height="1" fill="#b8b8b8"/><rect x="0" y="9" width="16" height="1" fill="#b8b8b8"/><rect x="2" y="12" width="12" height="1" fill="#b8b8b8"/></svg>
<svg class="a" style="left:1658px;top:573px;" width="16" height="14" viewBox="0 0 16 14"><rect x="3" y="0" width="12" height="1" fill="#b8b8b8"/><rect x="0" y="3" width="15" height="1" fill="#b8b8b8"/><rect x="3" y="6" width="12" height="1" fill="#b8b8b8"/><rect x="0" y="9" width="15" height="1" fill="#b8b8b8"/><rect x="3" y="12" width="12" height="1" fill="#b8b8b8"/></svg>
<svg class="a" style="left:1689px;top:573px;" width="16" height="14" viewBox="0 0 16 14"><rect x="0" y="0" width="15" height="1" fill="#b8b8b8"/><rect x="0" y="3" width="15" height="1" fill="#b8b8b8"/><rect x="0" y="6" width="15" height="1" fill="#b8b8b8"/><rect x="0" y="9" width="15" height="1" fill="#b8b8b8"/><rect x="0" y="12" width="11" height="1" fill="#b8b8b8"/></svg>
<svg class="a" style="left:1714px;top:573px;" width="16" height="14" viewBox="0 0 16 14"><rect x="0" y="0" width="15" height="1" fill="#b8b8b8"/><rect x="0" y="3" width="15" height="1" fill="#b8b8b8"/><rect x="0" y="6" width="15" height="1" fill="#b8b8b8"/><rect x="0" y="9" width="15" height="1" fill="#b8b8b8"/><rect x="2" y="12" width="11" height="1" fill="#b8b8b8"/></svg>
<svg class="a" style="left:1739px;top:573px;" width="16" height="14" viewBox="0 0 16 14"><rect x="0" y="0" width="15" height="1" fill="#b8b8b8"/><rect x="0" y="3" width="15" height="1" fill="#b8b8b8"/><rect x="0" y="6" width="15" height="1" fill="#b8b8b8"/><rect x="0" y="9" width="15" height="1" fill="#b8b8b8"/><rect x="4" y="12" width="11" height="1" fill="#b8b8b8"/></svg>
<svg class="a" style="left:1770px;top:573px;" width="16" height="14" viewBox="0 0 16 14"><rect x="0" y="0" width="15" height="1" fill="#b8b8b8"/><rect x="0" y="3" width="15" height="1" fill="#b8b8b8"/><rect x="0" y="6" width="15" height="1" fill="#b8b8b8"/><rect x="0" y="9" width="15" height="1" fill="#b8b8b8"/><rect x="0" y="12" width="15" height="1" fill="#b8b8b8"/></svg>
<div class="a" style="left:1606px;top:596px;width:180px;height:2px;background:#2e2e2e;"></div>
<svg class="a" style="left:1600px;top:598px;" width="30" height="40" viewBox="0 0 30 40"><rect x="6" y="9" width="5" height="1" fill="#b8b8b8"/><path d="M10 6.5L13 9.5L10 12.5Z" fill="#b8b8b8"/><rect x="13" y="1" width="1" height="15" fill="#b8b8b8"/><rect x="15" y="3" width="5" height="1" fill="#b8b8b8"/><rect x="15" y="6" width="7" height="1" fill="#b8b8b8"/><rect x="15" y="9" width="5" height="1" fill="#b8b8b8"/><rect x="15" y="12" width="7" height="1" fill="#b8b8b8"/><rect x="15" y="15" width="5" height="1" fill="#b8b8b8"/><rect x="6" y="20" width="5" height="1" fill="#b8b8b8"/><rect x="6" y="23" width="7" height="1" fill="#b8b8b8"/><rect x="6" y="26" width="5" height="1" fill="#b8b8b8"/><rect x="6" y="29" width="7" height="1" fill="#b8b8b8"/><rect x="6" y="32" width="5" height="1" fill="#b8b8b8"/><rect x="14" y="18" width="1" height="15" fill="#b8b8b8"/><rect x="18" y="26" width="5" height="1" fill="#b8b8b8"/><path d="M19 23.5L16 26.5L19 29.5Z" fill="#b8b8b8"/></svg>
<div class="t" style="left:1627px;top:605px;font-size:11px;color:#2d8ceb;">0</div>
<div class="t" style="left:1638px;top:607px;font-size:10.5px;color:#909090;">px</div>
<div class="t" style="left:1627px;top:622px;font-size:11px;color:#2d8ceb;">0</div>
<div class="t" style="left:1638px;top:624px;font-size:10.5px;color:#909090;">px</div>
<svg class="a" style="left:1670px;top:598px;" width="30" height="40" viewBox="0 0 30 40"><rect x="6" y="6" width="5" height="1" fill="#b8b8b8"/><path d="M10 3.5L13 6.5L10 9.5Z" fill="#b8b8b8"/><rect x="14.5" y="4.5" width="9" height="5" fill="none" stroke="#b8b8b8"/><rect x="14" y="11" width="8" height="1" fill="#b8b8b8"/><rect x="14" y="14" width="9" height="1" fill="#b8b8b8"/><rect x="14" y="17" width="8" height="1" fill="#b8b8b8"/><rect x="14" y="23" width="8" height="1" fill="#b8b8b8"/><rect x="14" y="26" width="9" height="1" fill="#b8b8b8"/><rect x="14" y="29" width="8" height="1" fill="#b8b8b8"/><rect x="6" y="34" width="5" height="1" fill="#b8b8b8"/><path d="M10 31.5L13 34.5L10 37.5Z" fill="#b8b8b8"/><rect x="14.5" y="32.5" width="9" height="5" fill="none" stroke="#b8b8b8"/></svg>
<div class="t" style="left:1700px;top:605px;font-size:11px;color:#2d8ceb;">0</div>
<div class="t" style="left:1711px;top:607px;font-size:10.5px;color:#909090;">px</div>
<div class="t" style="left:1700px;top:622px;font-size:11px;color:#2d8ceb;">0</div>
<div class="t" style="left:1711px;top:624px;font-size:10.5px;color:#909090;">px</div>
<svg class="a" style="left:1740px;top:598px;" width="30" height="20" viewBox="0 0 30 20"><rect x="3" y="2" width="5" height="1" fill="#b8b8b8"/><path d="M7 -0.5L10 2.5L7 5.5Z" fill="#b8b8b8"/><rect x="13" y="2" width="5" height="1" fill="#b8b8b8"/><rect x="9" y="5" width="10" height="1" fill="#b8b8b8"/><rect x="9" y="8" width="10" height="1" fill="#b8b8b8"/><rect x="9" y="11" width="10" height="1" fill="#b8b8b8"/><rect x="9" y="14" width="9" height="1" fill="#b8b8b8"/></svg>
<div class="t" style="left:1765px;top:605px;font-size:11px;color:#2d8ceb;">0</div>
<div class="t" style="left:1776px;top:607px;font-size:10.5px;color:#909090;">px</div>
<div class="a" style="left:1743px;top:619px;width:21px;height:23px;background:#161616;border-radius:3px;border:1px solid #2a2a2a;"></div>
<svg class="a" style="left:1740px;top:620px;" width="50" height="20" viewBox="0 0 50 20"><path d="M5 5V14L10 9.5Z" fill="#2d8ceb"/><path d="M15.5 3.5H20.5V15.5H19.1V4.8H17.7V15.5H16.3V10.0H15.5A3.25 3.25 0 0 1 15.5 3.5Z" fill="#2d8ceb"/><path d="M32 3.5H37V15.5H35.6V4.8H34.2V15.5H32.8V10.0H32A3.25 3.25 0 0 1 32 3.5Z" fill="#b8b8b8"/><path d="M44 5V14L39 9.5Z" fill="#b8b8b8"/></svg>
<div class="a" style="left:1600px;top:687px;width:299px;height:2px;background:#1c1c1c;"></div>
<div class="t" style="left:1612px;top:703px;font-size:11.5px;color:#c8c8c8;">Brushes</div>
<svg class="a" style="left:1879px;top:699px;" width="11" height="10" viewBox="0 0 11 10"><path d="M0.5 1.5H9.5M0.5 5H9.5M0.5 8.5H9.5" stroke="#c8c8c8" stroke-width="1"/></svg>
<div class="a" style="left:1610px;top:728px;width:266px;height:100px;background:#0d0d0d;"></div>
<div class="a" style="left:1611px;top:729px;width:265px;height:98px;background:#262626;"></div>
<div class="a" style="left:1611px;top:729px;width:32px;height:32px;background:#262626;border-right:1px solid #1c1c1c;border-bottom:1px solid #1c1c1c;"></div>
<div class="a" style="left:1625.5px;top:737.5px;width:1.0px;height:1.0px;border-radius:50%;background:#a8a8a8"></div>
<div class="t" style="left:1610.0px;width:32px;text-align:center;top:751.0px;font-size:9.5px;color:#5e5e5e;">1</div>
<div class="a" style="left:1643px;top:729px;width:32px;height:32px;background:#262626;border-right:1px solid #1c1c1c;border-bottom:1px solid #1c1c1c;"></div>
<div class="a" style="left:1657.0px;top:737.0px;width:2px;height:2px;border-radius:50%;background:#a8a8a8"></div>
<div class="t" style="left:1642.0px;width:32px;text-align:center;top:751.0px;font-size:9.5px;color:#5e5e5e;">3</div>
<div class="a" style="left:1675px;top:729px;width:32px;height:32px;background:#262626;border-right:1px solid #1c1c1c;border-bottom:1px solid #1c1c1c;"></div>
<div class="a" style="left:1687.5px;top:735.5px;width:5.0px;height:5.0px;border-radius:50%;background:#a8a8a8"></div>
<div class="t" style="left:1674.0px;width:32px;text-align:center;top:751.0px;font-size:9.5px;color:#5e5e5e;">5</div>
<div class="a" style="left:1707px;top:729px;width:32px;height:32px;background:#262626;border-right:1px solid #1c1c1c;border-bottom:1px solid #1c1c1c;"></div>
<div class="a" style="left:1717.5px;top:733.5px;width:9.0px;height:9.0px;border-radius:50%;background:#a8a8a8"></div>
<div class="t" style="left:1706.0px;width:32px;text-align:center;top:751.0px;font-size:9.5px;color:#5e5e5e;">9</div>
<div class="a" style="left:1739px;top:729px;width:32px;height:32px;background:#262626;border-right:1px solid #1c1c1c;border-bottom:1px solid #1c1c1c;"></div>
<div class="a" style="left:1747.5px;top:731.5px;width:13.0px;height:13.0px;border-radius:50%;background:#a8a8a8"></div>
<div class="t" style="left:1738.0px;width:32px;text-align:center;top:751.0px;font-size:9.5px;color:#5e5e5e;">13</div>
<div class="a" style="left:1771px;top:729px;width:32px;height:32px;background:#262626;border-right:1px solid #1c1c1c;border-bottom:1px solid #1c1c1c;"></div>
<div class="a" style="left:1779.5px;top:731.5px;width:13.0px;height:13.0px;border-radius:50%;background:#a8a8a8"></div>
<div class="t" style="left:1770.0px;width:32px;text-align:center;top:751.0px;font-size:9.5px;color:#5e5e5e;">19</div>
<div class="a" style="left:1803px;top:729px;width:32px;height:32px;background:#262626;border-right:1px solid #1c1c1c;border-bottom:1px solid #1c1c1c;"></div>
<div class="a" style="left:1816.8px;top:736.8px;width:2.4px;height:2.4px;border-radius:50%;background:#b0b0b0;filter:blur(1.2px);box-shadow:0 0 3px 1px rgba(170,170,170,0.45)"></div>
<div class="t" style="left:1802.0px;width:32px;text-align:center;top:751.0px;font-size:9.5px;color:#5e5e5e;">5</div>
<div class="a" style="left:1835px;top:729px;width:32px;height:32px;background:#262626;border-right:1px solid #1c1c1c;border-bottom:1px solid #1c1c1c;"></div>
<div class="a" style="left:1848.0px;top:736.0px;width:4px;height:4px;border-radius:50%;background:#b0b0b0;filter:blur(1.2px);box-shadow:0 0 3px 1px rgba(170,170,170,0.45)"></div>
<div class="t" style="left:1834.0px;width:32px;text-align:center;top:751.0px;font-size:9.5px;color:#5e5e5e;">9</div>
<div class="a" style="left:1611px;top:762px;width:32px;height:32px;background:#262626;border-right:1px solid #1c1c1c;border-bottom:1px solid #1c1c1c;"></div>
<div class="a" style="left:1623.0px;top:767.5px;width:6px;height:6px;border-radius:50%;background:#b0b0b0;filter:blur(1.2px);box-shadow:0 0 3px 1px rgba(170,170,170,0.45)"></div>
<div class="t" style="left:1610.0px;width:32px;text-align:center;top:783.5px;font-size:9.5px;color:#5e5e5e;">13</div>
<div class="a" style="left:1643px;top:762px;width:32px;height:32px;background:#262626;border-right:1px solid #1c1c1c;border-bottom:1px solid #1c1c1c;"></div>
<div class="a" style="left:1655.0px;top:767.5px;width:6px;height:6px;border-radius:50%;background:#b0b0b0;filter:blur(1.2px);box-shadow:0 0 3px 1px rgba(170,170,170,0.45)"></div>
<div class="t" style="left:1642.0px;width:32px;text-align:center;top:783.5px;font-size:9.5px;color:#5e5e5e;">17</div>
<div class="a" style="left:1675px;top:762px;width:32px;height:32px;background:#3a3a3a;border-right:1px solid #1c1c1c;border-bottom:1px solid #1c1c1c;"></div>
<div class="a" style="left:1687.0px;top:767.5px;width:6px;height:6px;border-radius:50%;background:#b0b0b0;filter:blur(1.2px);box-shadow:0 0 3px 1px rgba(170,170,170,0.45)"></div>
<div class="t" style="left:1674.0px;width:32px;text-align:center;top:783.5px;font-size:9.5px;color:#5e5e5e;">21</div>
<div class="a" style="left:1707px;top:762px;width:32px;height:32px;background:#262626;border-right:1px solid #1c1c1c;border-bottom:1px solid #1c1c1c;"></div>
<div class="a" style="left:1719.0px;top:767.5px;width:6px;height:6px;border-radius:50%;background:#b0b0b0;filter:blur(1.2px);box-shadow:0 0 3px 1px rgba(170,170,170,0.45)"></div>
<div class="t" style="left:1706.0px;width:32px;text-align:center;top:783.5px;font-size:9.5px;color:#5e5e5e;">27</div>
<div class="a" style="left:1739px;top:762px;width:32px;height:32px;background:#262626;border-right:1px solid #1c1c1c;border-bottom:1px solid #1c1c1c;"></div>
<div class="a" style="left:1751.0px;top:767.5px;width:6px;height:6px;border-radius:50%;background:#b0b0b0;filter:blur(1.2px);box-shadow:0 0 3px 1px rgba(170,170,170,0.45)"></div>
<div class="t" style="left:1738.0px;width:32px;text-align:center;top:783.5px;font-size:9.5px;color:#5e5e5e;">35</div>
<div class="a" style="left:1771px;top:762px;width:32px;height:32px;background:#262626;border-right:1px solid #1c1c1c;border-bottom:1px solid #1c1c1c;"></div>
<div class="a" style="left:1783.0px;top:767.5px;width:6px;height:6px;border-radius:50%;background:#b0b0b0;filter:blur(1.2px);box-shadow:0 0 3px 1px rgba(170,170,170,0.45)"></div>
<div class="t" style="left:1770.0px;width:32px;text-align:center;top:783.5px;font-size:9.5px;color:#5e5e5e;">45</div>
<div class="a" style="left:1803px;top:762px;width:32px;height:32px;background:#262626;border-right:1px solid #1c1c1c;border-bottom:1px solid #1c1c1c;"></div>
<div class="a" style="left:1815.0px;top:767.5px;width:6px;height:6px;border-radius:50%;background:#b0b0b0;filter:blur(1.2px);box-shadow:0 0 3px 1px rgba(170,170,170,0.45)"></div>
<div class="t" style="left:1802.0px;width:32px;text-align:center;top:783.5px;font-size:9.5px;color:#5e5e5e;">65</div>
<div class="a" style="left:1835px;top:762px;width:32px;height:32px;background:#262626;border-right:1px solid #1c1c1c;border-bottom:1px solid #1c1c1c;"></div>
<div class="a" style="left:1847.0px;top:767.5px;width:6px;height:6px;border-radius:50%;background:#b0b0b0;filter:blur(1.2px);box-shadow:0 0 3px 1px rgba(170,170,170,0.45)"></div>
<div class="t" style="left:1834.0px;width:32px;text-align:center;top:783.5px;font-size:9.5px;color:#5e5e5e;">100</div>
<div class="a" style="left:1611px;top:794px;width:32px;height:32px;background:#262626;border-right:1px solid #1c1c1c;border-bottom:1px solid #1c1c1c;"></div>
<div class="a" style="left:1623.0px;top:800.0px;width:6px;height:6px;border-radius:50%;background:#b0b0b0;filter:blur(1.2px);box-shadow:0 0 3px 1px rgba(170,170,170,0.45)"></div>
<div class="t" style="left:1610.0px;width:32px;text-align:center;top:816.0px;font-size:9.5px;color:#5e5e5e;">200</div>
<div class="a" style="left:1643px;top:794px;width:32px;height:32px;background:#262626;border-right:1px solid #1c1c1c;border-bottom:1px solid #1c1c1c;"></div>
<div class="a" style="left:1655.0px;top:800.0px;width:6px;height:6px;border-radius:50%;background:#b0b0b0;filter:blur(1.2px);box-shadow:0 0 3px 1px rgba(170,170,170,0.45)"></div>
<div class="t" style="left:1642.0px;width:32px;text-align:center;top:816.0px;font-size:9.5px;color:#5e5e5e;">300</div>
<div class="a" style="left:1675px;top:794px;width:32px;height:32px;background:#262626;border-right:1px solid #1c1c1c;border-bottom:1px solid #1c1c1c;"></div>
<div class="a" style="left:1685.0px;top:801.5px;width:10px;height:3px;border-radius:50%;background:#b0b0b0;filter:blur(0.7px);transform:rotate(-20deg)"></div>
<div class="t" style="left:1674.0px;width:32px;text-align:center;top:816.0px;font-size:9.5px;color:#5e5e5e;">11</div>
<div class="a" style="left:1707px;top:794px;width:32px;height:32px;background:#262626;border-right:1px solid #1c1c1c;border-bottom:1px solid #1c1c1c;"></div>
<div class="a" style="left:1717.0px;top:801.5px;width:10px;height:3px;border-radius:50%;background:#b0b0b0;filter:blur(0.7px);transform:rotate(-50deg)"></div>
<div class="t" style="left:1706.0px;width:32px;text-align:center;top:816.0px;font-size:9.5px;color:#5e5e5e;">11</div>
<div class="a" style="left:1739px;top:794px;width:32px;height:32px;background:#262626;border-right:1px solid #1c1c1c;border-bottom:1px solid #1c1c1c;"></div>
<div class="a" style="left:1749.0px;top:801.5px;width:10px;height:3px;border-radius:50%;background:#b0b0b0;filter:blur(0.7px);transform:rotate(-90deg)"></div>
<div class="t" style="left:1738.0px;width:32px;text-align:center;top:816.0px;font-size:9.5px;color:#5e5e5e;">11</div>
<div class="a" style="left:1771px;top:794px;width:32px;height:32px;background:#262626;border-right:1px solid #1c1c1c;border-bottom:1px solid #1c1c1c;"></div>
<div class="a" style="left:1781.0px;top:801.5px;width:10px;height:3px;border-radius:50%;background:#b0b0b0;filter:blur(0.7px);transform:rotate(-20deg)"></div>
<div class="t" style="left:1770.0px;width:32px;text-align:center;top:816.0px;font-size:9.5px;color:#5e5e5e;">45</div>
<div class="a" style="left:1803px;top:794px;width:32px;height:32px;background:#262626;border-right:1px solid #1c1c1c;border-bottom:1px solid #1c1c1c;"></div>
<div class="a" style="left:1813.0px;top:801.5px;width:10px;height:3px;border-radius:50%;background:#b0b0b0;filter:blur(0.7px);transform:rotate(-50deg)"></div>
<div class="t" style="left:1802.0px;width:32px;text-align:center;top:816.0px;font-size:9.5px;color:#5e5e5e;">45</div>
<div class="a" style="left:1835px;top:794px;width:32px;height:32px;background:#262626;border-right:1px solid #1c1c1c;border-bottom:1px solid #1c1c1c;"></div>
<div class="a" style="left:1845.0px;top:801.5px;width:10px;height:3px;border-radius:50%;background:#b0b0b0;filter:blur(0.7px);transform:rotate(-90deg)"></div>
<div class="t" style="left:1834.0px;width:32px;text-align:center;top:816.0px;font-size:9.5px;color:#5e5e5e;">45</div>
<div class="t" style="left:1600px;width:85px;text-align:right;top:842px;font-size:11px;color:#646464;">Diameter:</div>
<div class="t" style="left:1690px;top:842px;font-size:11px;color:#646464;">21 <span style="font-size:10px">px</span></div>
<div class="t" style="left:1600px;width:85px;text-align:right;top:861px;font-size:11px;color:#646464;">Angle:</div>
<div class="t" style="left:1690px;top:861px;font-size:11px;color:#646464;">0 <span style="font-size:10px">°</span></div>
<div class="t" style="left:1600px;width:85px;text-align:right;top:881px;font-size:11px;color:#646464;">Roundness:</div>
<div class="t" style="left:1690px;top:881px;font-size:11px;color:#646464;">100 <span style="font-size:10px">%</span></div>
<div class="t" style="left:1600px;width:85px;text-align:right;top:900px;font-size:11px;color:#646464;">Hardness:</div>
<div class="t" style="left:1690px;top:900px;font-size:11px;color:#646464;">0 <span style="font-size:10px">%</span></div>
<div class="a" style="left:1627px;top:912px;width:14px;height:14px;background:#4a4a4a;border-radius:2px;"></div>
<svg class="a" style="left:1629px;top:914px;" width="10" height="10" viewBox="0 0 10 10"><path d="M1 5L4 8L9 2" stroke="#bbb" stroke-width="1.6" fill="none"/></svg>
<div class="t" style="left:1645px;top:919px;font-size:11px;color:#646464;">Spacing:</div>
<div class="t" style="left:1690px;top:919px;font-size:11px;color:#646464;">25 <span style="font-size:10px">%</span></div>
<div class="a" style="left:1733px;top:839px;width:67px;height:66px;background:#0a0a0a;"></div>
<div class="a" style="left:1734px;top:840px;width:65px;height:64px;background:#262626;"></div>
<div class="a" style="left:1762px;top:869px;width:8px;height:8px;border-radius:50%;background:#c8c8c8;filter:blur(1.5px);box-shadow:0 0 5px 3px rgba(200,200,200,0.4)"></div>
<svg class="a" style="left:1748px;top:913px;" width="12" height="12" viewBox="0 0 12 12"><path d="M0 0H12V12H5L0 7Z" fill="#555"/><path d="M0 7H5V12" fill="#232323"/></svg>
<svg class="a" style="left:1773px;top:913px;" width="11" height="13" viewBox="0 0 11 13"><path d="M0 2H11M3.5 0.7H7.5M1.5 3.5V12.5H9.5V3.5M4 5V11M7 5V11" stroke="#555" stroke-width="1.1" fill="none"/></svg>
<div class="t" style="left:1611px;top:944px;font-size:11px;color:#646464;">Brush Dynamics</div>
<div class="a" style="left:1699px;top:944px;width:102px;height:2px;background:#333;"></div>
<div class="t" style="left:1600px;width:85px;text-align:right;top:966px;font-size:11px;color:#646464;">Size:</div>
<div class="a" style="left:1690px;top:957px;width:105px;height:18px;background:#2b2b2b;border-radius:3px;"></div>
<div class="t" style="left:1698px;top:966px;font-size:11px;color:#5e5e5e;">Pen Pressure</div>
<svg class="a" style="left:1782px;top:964px;" width="9" height="5" viewBox="0 0 9 5"><path d="M0.5 0.5L4.5 4.5L8.5 0.5" stroke="#5e5e5e" stroke-width="1.2" fill="none"/></svg>
<div class="t" style="left:1612px;top:986px;font-size:11px;color:#646464;">Minimum Size:</div>
<div class="t" style="left:1690px;top:986px;font-size:11px;color:#646464;">1 <span style="font-size:10px">%</span></div>
<div class="t" style="left:1600px;width:85px;text-align:right;top:1007px;font-size:11px;color:#646464;">Angle:</div>
<div class="a" style="left:1690px;top:998px;width:105px;height:18px;background:#2b2b2b;border-radius:3px;"></div>
<div class="t" style="left:1698px;top:1007px;font-size:11px;color:#5e5e5e;">Off</div>
<svg class="a" style="left:1782px;top:1005px;" width="9" height="5" viewBox="0 0 9 5"><path d="M0.5 0.5L4.5 4.5L8.5 0.5" stroke="#5e5e5e" stroke-width="1.2" fill="none"/></svg>
<div class="a" style="left:1690px;top:1019px;width:105px;height:3px;background:#2b2b2b;"></div>
</body></html>
